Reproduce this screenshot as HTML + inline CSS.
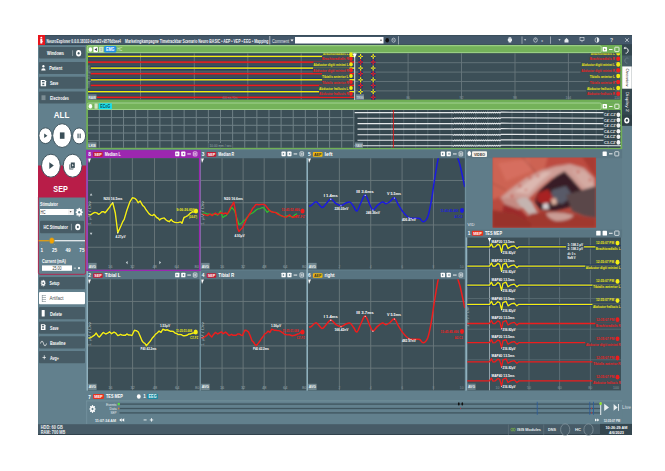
<!DOCTYPE html>
<html><head><meta charset="utf-8"><style>html,body{margin:0;padding:0;background:#fff;width:665px;height:471px;overflow:hidden}svg{display:block}</style></head>
<body><svg width="665" height="471" viewBox="0 0 665 471">
<rect x="38" y="35" width="594" height="400" fill="#62808d"/>
<rect x="38" y="35.3" width="594" height="9.7" fill="#44586a"/>
<line x1="38" y1="35.6" x2="632" y2="35.6" stroke="#2c3c48" stroke-width="0.6"/>
<line x1="38" y1="44.6" x2="632" y2="44.6" stroke="#2e3e4a" stroke-width="0.6"/>
<rect x="38" y="35" width="7" height="10" fill="#e8141b"/>
<ellipse cx="41.3" cy="37.4" rx="1.0" ry="0.7" fill="#ffffff"/>
<path d="M40.3,38.6 h2.0 v2.2 l1,0.6 l-1,0.4 v1.8 h-2 z" fill="#ffffff" />
<text x="46.5" y="42.9" font-size="6.0" fill="#f4f6f8" font-family="Liberation Sans" font-weight="bold" textLength="74.5" lengthAdjust="spacingAndGlyphs">NeuroExplorer 0.0.0.18102-beta22+9576dbee4</text>
<text x="125" y="42.6" font-size="6.0" fill="#f4f6f8" font-family="Liberation Sans" font-weight="bold" textLength="143.5" lengthAdjust="spacingAndGlyphs">Marketingkampagne Timetrackbar Scenario Neuro BASIC • AEP • VEP • EEG • Mapping</text>
<line x1="269.8" y1="36" x2="269.8" y2="44.5" stroke="#ffffff" stroke-width="0.6"/>
<text x="272" y="42.6" font-size="6" fill="#e8eef0" font-family="Liberation Sans" textLength="17" lengthAdjust="spacingAndGlyphs">Comment</text>
<path d="M290.5,39.5 h3 l-1.5,2 z" fill="#ffffff" />
<rect x="295" y="37" width="88.5" height="6.5" fill="#ffffff"/>
<path d="M380,39.8 h2 l-1,1.4 z" fill="#333" />
<rect x="507.8" y="38.6" width="4.2" height="2.6" fill="#e6ecef" rx="0.4"/>
<rect x="508.6" y="37.3" width="2.6" height="1.4" fill="#e6ecef"/>
<rect x="508.6" y="41" width="2.6" height="1.5" fill="#e6ecef"/>
<line x1="522" y1="36.5" x2="522" y2="43.8" stroke="#e6ecef" stroke-width="0.5"/>
<path d="M524,39.2 h2.2 l-1.1,1.5 z" fill="#e6ecef" />
<ellipse cx="535.5" cy="40" rx="1.8" ry="2.2" fill="none" stroke="#e6ecef" stroke-width="0.6"/>
<line x1="535.5" y1="38.5" x2="535.5" y2="40" stroke="#e6ecef" stroke-width="0.5"/>
<text x="542" y="41.6" font-size="3.5" fill="#e6ecef" font-family="Liberation Sans" text-anchor="middle">x</text>
<line x1="550.5" y1="36.5" x2="550.5" y2="43.8" stroke="#e6ecef" stroke-width="0.5"/>
<path d="M558.4,39.2 h2.2 l-1.1,1.5 z" fill="#e6ecef" />
<path d="M564.5,40 l2,-2 l2,2 v2.4 h-4 z" fill="#e6ecef" />
<rect x="580" y="37.6" width="4" height="3" fill="none" stroke="#e6ecef" stroke-width="0.6"/>
<line x1="582" y1="40.6" x2="582" y2="42.2" stroke="#e6ecef" stroke-width="0.6"/>
<ellipse cx="597" cy="40" rx="2" ry="2.4" fill="none" stroke="#e6ecef" stroke-width="0.6"/>
<path d="M597,37.6 a2,2.4 0 0 1 0,4.8 z" fill="#e6ecef" />
<text x="611.5" y="42.2" font-size="5" fill="#e6ecef" font-family="Liberation Sans" font-weight="bold" text-anchor="middle">?</text>
<line x1="625.3" y1="38.3" x2="628.7" y2="41.9" stroke="#e6ecef" stroke-width="0.7"/>
<line x1="628.7" y1="38.3" x2="625.3" y2="41.9" stroke="#e6ecef" stroke-width="0.7"/>
<ellipse cx="387.2" cy="40.2" rx="1.8" ry="2.2" fill="#111"/>
<ellipse cx="393.6" cy="40.2" rx="1.7" ry="2.1" fill="none" stroke="#dfe6ea" stroke-width="0.6"/>
<line x1="392.6" y1="39" x2="394.6" y2="41.4" stroke="#dfe6ea" stroke-width="0.5"/>
<line x1="398.5" y1="36.2" x2="398.5" y2="44.5" stroke="#e6ecef" stroke-width="0.5"/>
<rect x="39" y="47" width="46.3" height="11.5" fill="#475c66" rx="1"/>
<rect x="39" y="62" width="46.3" height="12" fill="#475c66" rx="1"/>
<rect x="39" y="76.8" width="46.3" height="12" fill="#475c66" rx="1"/>
<rect x="39" y="91.4" width="46.3" height="12" fill="#475c66" rx="1"/>
<text x="47" y="55" font-size="5.2" fill="#ffffff" font-family="Liberation Sans" font-weight="bold" textLength="17" lengthAdjust="spacingAndGlyphs">Windows</text>
<line x1="72.6" y1="50.3" x2="72.6" y2="56" stroke="#c8d2d6" stroke-width="0.5"/>
<ellipse cx="78.6" cy="53.2" rx="2.6" ry="3.2" fill="#ffffff"/>
<ellipse cx="78.6" cy="53.2" rx="1.0" ry="1.2" fill="#475c66"/>
<ellipse cx="43.4" cy="66.3" rx="1.1" ry="1.3" fill="#ffffff"/>
<path d="M41.2,70.6 q0,-2.4 2.2,-2.4 q2.2,0 2.2,2.4 z" fill="#ffffff" />
<text x="49.2" y="69.8" font-size="5.2" fill="#ffffff" font-family="Liberation Sans" font-weight="bold" textLength="13" lengthAdjust="spacingAndGlyphs">Patient</text>
<path d="M40.7,80.1 h4.2 l1.2,1.2 v4.9 h-5.4 z" fill="#ffffff" />
<rect x="42" y="81" width="2.6" height="1.4" fill="#475c66"/>
<rect x="42.3" y="83.6" width="2" height="1.6" fill="#475c66"/>
<text x="49.9" y="84.5" font-size="5.2" fill="#ffffff" font-family="Liberation Sans" font-weight="bold" textLength="8.5" lengthAdjust="spacingAndGlyphs">Save</text>
<rect x="41.5" y="95.3" width="4" height="4.8" fill="#7d8d94"/>
<text x="49.9" y="99.5" font-size="5.2" fill="#ffffff" font-family="Liberation Sans" font-weight="bold" textLength="19" lengthAdjust="spacingAndGlyphs">Electrodes</text>
<text x="61.5" y="118" font-size="9.5" fill="#ffffff" font-family="Liberation Sans" font-weight="bold" text-anchor="middle" textLength="15.5" lengthAdjust="spacingAndGlyphs">ALL</text>
<ellipse cx="45.5" cy="135.7" rx="6.6" ry="7.9" fill="#ffffff" stroke="#40555f" stroke-width="1.0"/>
<path d="M44.2,133.6 l3.2,2.2 l-3.2,2.2 z" fill="#3b4f58" />
<ellipse cx="62.1" cy="135.6" rx="9.4" ry="11.9" fill="#ffffff" stroke="#40555f" stroke-width="1.0"/>
<rect x="59.9" y="132.4" width="4.6" height="6.4" fill="#3b4f58"/>
<ellipse cx="79.1" cy="135.9" rx="6.5" ry="8.0" fill="#ffffff" stroke="#40555f" stroke-width="1.0"/>
<rect x="77.5" y="133.6" width="1.1" height="4.6" fill="#3b4f58"/>
<rect x="79.6" y="133.6" width="1.1" height="4.6" fill="#3b4f58"/>
<rect x="38" y="165.5" width="48" height="32" fill="#b81d48"/>
<ellipse cx="50.9" cy="165.7" rx="9.4" ry="11.5" fill="#ffffff" stroke="#40555f" stroke-width="1.0"/>
<path d="M49.3,162.3 l4.5,3.3 l-4.5,3.3 z" fill="#3b4f58" />
<ellipse cx="72.6" cy="165.7" rx="9.4" ry="11.5" fill="#ffffff" stroke="#40555f" stroke-width="1.0"/>
<rect x="70.8" y="162.5" width="4" height="5.4" fill="#3b4f58"/>
<path d="M70.1,164 v4.7 h3.6" fill="none" stroke="#3b4f58" stroke-width="0.5" />
<path d="M69.5,164.6 v4.7 h3.6" fill="none" stroke="#3b4f58" stroke-width="0.5" />
<path d="M72.2,164 l1.5,1.2 l-1.5,1.2 z" fill="#ffffff" />
<text x="60.6" y="191.5" font-size="9" fill="#ffffff" font-family="Liberation Sans" font-weight="bold" text-anchor="middle" textLength="14.5" lengthAdjust="spacingAndGlyphs">SEP</text>
<path d="M38.4,197 V272.5 q0,1.8 1.8,1.8 H83.9 q1.8,0 1.8,-1.8 V197" fill="none" stroke="#b81d48" stroke-width="0.9" />
<text x="40" y="206" font-size="4.8" fill="#ffffff" font-family="Liberation Sans" font-weight="bold" textLength="18" lengthAdjust="spacingAndGlyphs">Stimulator</text>
<rect x="40" y="209" width="33.8" height="6" fill="#ffffff"/>
<rect x="68" y="209.4" width="5.4" height="5.2" fill="#f2f2f2"/>
<path d="M69.6,211.3 h2 l-1,1.3 z" fill="#333" />
<text x="40.5" y="213.8" font-size="4.5" fill="#333" font-family="Liberation Sans" textLength="5" lengthAdjust="spacingAndGlyphs">HC</text>
<ellipse cx="79.2" cy="212.2" rx="2.7" ry="3.3" fill="#ffffff"/>
<ellipse cx="79.2" cy="212.2" rx="1.1" ry="1.3" fill="#62808d"/>
<ellipse cx="79.2" cy="208.6" rx="0.75" ry="0.85" fill="#ffffff"/>
<ellipse cx="79.2" cy="215.79999999999998" rx="0.75" ry="0.85" fill="#ffffff"/>
<ellipse cx="76.4" cy="212.2" rx="0.75" ry="0.85" fill="#ffffff"/>
<ellipse cx="82.0" cy="212.2" rx="0.75" ry="0.85" fill="#ffffff"/>
<ellipse cx="77.2" cy="209.7" rx="0.75" ry="0.85" fill="#ffffff"/>
<ellipse cx="81.2" cy="209.7" rx="0.75" ry="0.85" fill="#ffffff"/>
<ellipse cx="77.2" cy="214.7" rx="0.75" ry="0.85" fill="#ffffff"/>
<ellipse cx="81.2" cy="214.7" rx="0.75" ry="0.85" fill="#ffffff"/>
<rect x="40" y="220.8" width="44" height="12.4" fill="#475c66" rx="1"/>
<text x="43.5" y="228.8" font-size="5" fill="#ffffff" font-family="Liberation Sans" font-weight="bold" textLength="24.5" lengthAdjust="spacingAndGlyphs">HC Stimulator</text>
<line x1="71.4" y1="223.8" x2="71.4" y2="230.3" stroke="#c8d2d6" stroke-width="0.5"/>
<ellipse cx="77.8" cy="227" rx="2.6" ry="3.2" fill="#ffffff"/>
<ellipse cx="77.8" cy="227" rx="1.0" ry="1.2" fill="#475c66"/>
<rect x="38.6" y="240.2" width="13" height="1.1" fill="#f5a300"/>
<rect x="52" y="240.2" width="33" height="1.1" fill="#ffffff"/>
<ellipse cx="51.8" cy="240.7" rx="2.6" ry="3.1" fill="#f5a300" stroke="#4d7fa0" stroke-width="0.4"/>
<ellipse cx="41.7" cy="244.6" rx="0.35" ry="0.45" fill="#9fb4bd"/>
<text x="41.7" y="252" font-size="4.6" fill="#ffffff" font-family="Liberation Sans" font-weight="bold" text-anchor="middle">1</text>
<ellipse cx="54.6" cy="244.6" rx="0.35" ry="0.45" fill="#9fb4bd"/>
<text x="54.6" y="252" font-size="4.6" fill="#ffffff" font-family="Liberation Sans" font-weight="bold" text-anchor="middle">25</text>
<ellipse cx="68" cy="244.6" rx="0.35" ry="0.45" fill="#9fb4bd"/>
<text x="68" y="252" font-size="4.6" fill="#ffffff" font-family="Liberation Sans" font-weight="bold" text-anchor="middle">49</text>
<ellipse cx="81.9" cy="244.6" rx="0.35" ry="0.45" fill="#9fb4bd"/>
<text x="81.9" y="252" font-size="4.6" fill="#ffffff" font-family="Liberation Sans" font-weight="bold" text-anchor="middle">75</text>
<text x="41.9" y="263" font-size="5" fill="#ffffff" font-family="Liberation Sans" font-weight="bold" textLength="24" lengthAdjust="spacingAndGlyphs">Current (mA)</text>
<rect x="42" y="265.4" width="30" height="5.4" fill="#ffffff"/>
<text x="57" y="269.8" font-size="4.6" fill="#333" font-family="Liberation Sans" text-anchor="middle" textLength="9" lengthAdjust="spacingAndGlyphs">25.00</text>
<rect x="73.8" y="267.8" width="2.2" height="0.6" fill="#ffffff"/>
<ellipse cx="79" cy="268.1" rx="1.0" ry="1.2" fill="#ffffff"/>
<rect x="39" y="277" width="46" height="12.2" fill="#475c66" rx="1"/>
<rect x="39" y="291.9" width="46" height="12.2" fill="#475c66" rx="1"/>
<rect x="39" y="307" width="46" height="12.2" fill="#475c66" rx="1"/>
<rect x="39" y="321.5" width="46" height="12.2" fill="#475c66" rx="1"/>
<rect x="39" y="336.2" width="46" height="12.2" fill="#475c66" rx="1"/>
<rect x="39" y="351" width="46" height="12.2" fill="#475c66" rx="1"/>
<rect x="39" y="291.9" width="46" height="12.4" fill="#ffffff" rx="1"/>
<ellipse cx="43.2" cy="283.1" rx="1.9" ry="2.3" fill="#ffffff"/>
<ellipse cx="43.2" cy="283.1" rx="0.8" ry="0.95" fill="#475c66"/>
<ellipse cx="43.2" cy="280.5" rx="0.6" ry="0.7" fill="#ffffff"/>
<ellipse cx="43.2" cy="285.70000000000005" rx="0.6" ry="0.7" fill="#ffffff"/>
<ellipse cx="41.2" cy="283.1" rx="0.6" ry="0.7" fill="#ffffff"/>
<ellipse cx="45.2" cy="283.1" rx="0.6" ry="0.7" fill="#ffffff"/>
<ellipse cx="41.75" cy="281.25" rx="0.6" ry="0.7" fill="#ffffff"/>
<ellipse cx="44.650000000000006" cy="281.25" rx="0.6" ry="0.7" fill="#ffffff"/>
<ellipse cx="41.75" cy="284.95000000000005" rx="0.6" ry="0.7" fill="#ffffff"/>
<ellipse cx="44.650000000000006" cy="284.95000000000005" rx="0.6" ry="0.7" fill="#ffffff"/>
<text x="49.5" y="285" font-size="5.2" fill="#ffffff" font-family="Liberation Sans" font-weight="bold" textLength="10" lengthAdjust="spacingAndGlyphs">Setup</text>
<line x1="42" y1="295.5" x2="46" y2="295.5" stroke="#6b7a80" stroke-width="0.5"/>
<line x1="42" y1="297.5" x2="46" y2="297.5" stroke="#6b7a80" stroke-width="0.5"/>
<line x1="42" y1="299.5" x2="46" y2="299.5" stroke="#6b7a80" stroke-width="0.5"/>
<line x1="42" y1="301.5" x2="46" y2="301.5" stroke="#6b7a80" stroke-width="0.5"/>
<line x1="42.3" y1="295" x2="42.3" y2="302" stroke="#6b7a80" stroke-width="0.5"/>
<text x="49.6" y="300.4" font-size="5.4" fill="#4a4f52" font-family="Liberation Sans" textLength="14" lengthAdjust="spacingAndGlyphs">Artifact</text>
<rect x="41.7" y="310" width="3" height="6.6" fill="#ffffff" rx="0.6"/>
<text x="50" y="315.5" font-size="5.2" fill="#ffffff" font-family="Liberation Sans" font-weight="bold" textLength="12" lengthAdjust="spacingAndGlyphs">Delete</text>
<path d="M40.9,324.3 h3.6 l1,1 v4.8 h-4.6 z" fill="#ffffff" />
<rect x="41.9" y="325.1" width="2.2" height="1.2" fill="#475c66"/>
<rect x="42.2" y="327.3" width="1.6" height="1.6" fill="#475c66"/>
<text x="50" y="330" font-size="5.2" fill="#ffffff" font-family="Liberation Sans" font-weight="bold" textLength="8.5" lengthAdjust="spacingAndGlyphs">Save</text>
<path d="M40.5,343.5 q1.5,-5 3,0 t3,0" fill="none" stroke="#ffffff" stroke-width="0.7" />
<text x="50" y="344.8" font-size="5.2" fill="#ffffff" font-family="Liberation Sans" font-weight="bold" textLength="15.5" lengthAdjust="spacingAndGlyphs">Baseline</text>
<rect x="42.5" y="357" width="3.4" height="0.7" fill="#ffffff"/>
<rect x="43.85" y="355.3" width="0.7" height="4" fill="#ffffff"/>
<text x="50" y="359.5" font-size="5.2" fill="#ffffff" font-family="Liberation Sans" font-weight="bold" textLength="9" lengthAdjust="spacingAndGlyphs">Avg+</text>
<rect x="86.2" y="44.9" width="536" height="57.6" fill="#70af56"/>
<rect x="87.3" y="45.7" width="514" height="7" fill="#74b25a" rx="1.5" stroke="#a9d995" stroke-width="0.9"/>
<rect x="88" y="53.2" width="532.3" height="46.4" fill="#3c4f57"/>
<rect x="88.2" y="46.6" width="4.4" height="5.8" fill="#8cc474" rx="1"/>
<ellipse cx="90.4" cy="49.5" rx="1.7" ry="2.2" fill="#ffffff"/>
<rect x="93.4" y="46.8" width="4.5" height="5.4" fill="#ffffff" rx="0.8"/>
<path d="M94.5,49.5 l2.4,-1.6 v3.2 z" fill="#334" />
<rect x="99" y="46.8" width="4.5" height="5.4" fill="#cfe3c0" rx="0.5"/>
<text x="101.2" y="51.2" font-size="4" fill="#8aa080" font-family="Liberation Sans" text-anchor="middle">1</text>
<rect x="104.2" y="46.1" width="12.1" height="6.4" fill="#1f8fe6" rx="1.2"/>
<text x="110.2" y="51.2" font-size="5" fill="#ffffff" font-family="Liberation Sans" font-weight="bold" text-anchor="middle" textLength="8.5" lengthAdjust="spacingAndGlyphs">EMG</text>
<text x="117.2" y="51.3" font-size="4.8" fill="#d5ecd0" font-family="Liberation Sans" textLength="5" lengthAdjust="spacingAndGlyphs">HC</text>
<rect x="602.6" y="47" width="4.4" height="4.6" fill="#ffffff" rx="0.6"/>
<path d="M604,48.2 l2,1.1 l-2,1.1 z" fill="#70af56" />
<rect x="609" y="49" width="3.5" height="0.9" fill="#ffffff"/>
<rect x="614.8" y="47.2" width="4.2" height="4.4" fill="none" rx="0.6" stroke="#ffffff" stroke-width="0.8"/>
<line x1="88" y1="62.7" x2="620.3" y2="62.7" stroke="#66767c" stroke-width="0.9"/>
<line x1="88" y1="72.1" x2="620.3" y2="72.1" stroke="#66767c" stroke-width="0.9"/>
<line x1="88" y1="81.5" x2="620.3" y2="81.5" stroke="#66767c" stroke-width="0.9"/>
<line x1="88" y1="90.9" x2="620.3" y2="90.9" stroke="#66767c" stroke-width="0.9"/>
<rect x="88" y="54.5" width="266.7" height="3.8" fill="#22376c"/>
<rect x="90.8" y="66.19999999999999" width="263.9" height="3.8" fill="#22376c"/>
<rect x="90.8" y="77.89999999999999" width="263.9" height="3.8" fill="#22376c"/>
<rect x="88" y="89.8" width="266.7" height="3.8" fill="#22376c"/>
<rect x="88" y="60.7" width="266.7" height="2.8" fill="#3d3a52" opacity="0.6"/>
<rect x="90.8" y="72.3" width="263.9" height="2.8" fill="#3d3a52" opacity="0.6"/>
<rect x="90.8" y="84.0" width="263.9" height="2.8" fill="#3d3a52" opacity="0.6"/>
<rect x="96.7" y="95.89999999999999" width="258.0" height="2.8" fill="#3d3a52" opacity="0.6"/>
<line x1="140.5" y1="53.2" x2="140.5" y2="99.6" stroke="#66767c" stroke-width="0.9"/>
<line x1="194.3" y1="53.2" x2="194.3" y2="99.6" stroke="#66767c" stroke-width="0.9"/>
<line x1="247.8" y1="53.2" x2="247.8" y2="99.6" stroke="#66767c" stroke-width="0.9"/>
<line x1="301.2" y1="53.2" x2="301.2" y2="99.6" stroke="#66767c" stroke-width="0.9"/>
<line x1="354.7" y1="53.2" x2="354.7" y2="99.6" stroke="#66767c" stroke-width="0.9"/>
<line x1="408.1" y1="53.2" x2="408.1" y2="99.6" stroke="#66767c" stroke-width="0.9"/>
<line x1="461.5" y1="53.2" x2="461.5" y2="99.6" stroke="#66767c" stroke-width="0.9"/>
<line x1="515" y1="53.2" x2="515" y2="99.6" stroke="#66767c" stroke-width="0.9"/>
<line x1="568.4" y1="53.2" x2="568.4" y2="99.6" stroke="#66767c" stroke-width="0.9"/>
<rect x="88" y="55.65" width="266.7" height="1.5" fill="#f2ec10"/>
<rect x="90.8" y="67.35" width="263.9" height="1.5" fill="#f2ec10"/>
<rect x="90.8" y="79.05" width="263.9" height="1.5" fill="#f2ec10"/>
<rect x="88" y="90.95" width="266.7" height="1.5" fill="#f2ec10"/>
<rect x="88" y="61.35" width="266.7" height="1.5" fill="#ee1c1c"/>
<rect x="90.8" y="72.95" width="263.9" height="1.5" fill="#ee1c1c"/>
<rect x="90.8" y="84.65" width="263.9" height="1.5" fill="#ee1c1c"/>
<rect x="96.7" y="96.55" width="258.0" height="1.5" fill="#ee1c1c"/>
<text x="0" y="0" font-size="3.5" fill="#8fa0a6" font-family="Liberation Sans" transform="translate(90.2,88) rotate(-90)" textLength="23" lengthAdjust="spacingAndGlyphs">Scale: 500 µV/Div</text>
<rect x="88" y="94.3" width="8.5" height="5.5" fill="#6b7f88"/>
<text x="92.2" y="98.6" font-size="4.2" fill="#e8eef2" font-family="Liberation Sans" font-weight="bold" text-anchor="middle" textLength="7.5" lengthAdjust="spacingAndGlyphs">RAW</text>
<text x="230" y="99" font-size="3.5" fill="#7d8d93" font-family="Liberation Sans" text-anchor="middle" textLength="15" lengthAdjust="spacingAndGlyphs">400 ms / Div</text>
<clipPath id="c1"><rect x="300" y="53.2" width="60" height="48"/></clipPath>
<rect x="323" y="53.2" width="26.5" height="2.6" fill="#3c4f57"/>
<rect x="322" y="55.9" width="27.5" height="5.8" fill="#3c4f57"/>
<rect x="313.5" y="61.50000000000001" width="36.0" height="5.8" fill="#3c4f57"/>
<rect x="313" y="67.3" width="36.5" height="5.8" fill="#3c4f57"/>
<rect x="322" y="73.1" width="27.5" height="5.8" fill="#3c4f57"/>
<rect x="322" y="79.1" width="27.5" height="5.8" fill="#3c4f57"/>
<rect x="319" y="85.1" width="30.5" height="5.8" fill="#3c4f57"/>
<rect x="319" y="90.89999999999999" width="30.5" height="5.8" fill="#3c4f57"/>
<g clip-path="url(#c1)">
<text x="323" y="54.9" font-size="4.4" fill="#f2ec10" font-family="Liberation Sans" font-weight="bold" textLength="25.5" lengthAdjust="spacingAndGlyphs">Brachioradialis L</text>
<text x="322" y="60.4" font-size="4.4" fill="#ee2020" font-family="Liberation Sans" font-weight="bold" textLength="26.5" lengthAdjust="spacingAndGlyphs">Brachioradialis R</text>
<text x="313.5" y="66.0" font-size="4.4" fill="#f2ec10" font-family="Liberation Sans" font-weight="bold" textLength="35.0" lengthAdjust="spacingAndGlyphs">Abductor digiti minimi L</text>
<text x="313" y="71.8" font-size="4.4" fill="#ee2020" font-family="Liberation Sans" font-weight="bold" textLength="35.5" lengthAdjust="spacingAndGlyphs">Abductor digiti minimi R</text>
<text x="322" y="77.6" font-size="4.4" fill="#f2ec10" font-family="Liberation Sans" font-weight="bold" textLength="26.5" lengthAdjust="spacingAndGlyphs">Tibialis anterior L</text>
<text x="322" y="83.6" font-size="4.4" fill="#ee2020" font-family="Liberation Sans" font-weight="bold" textLength="26.5" lengthAdjust="spacingAndGlyphs">Tibialis anterior R</text>
<text x="319" y="89.6" font-size="4.4" fill="#f2ec10" font-family="Liberation Sans" font-weight="bold" textLength="29.5" lengthAdjust="spacingAndGlyphs">Abductor hallucis L</text>
<text x="319" y="95.39999999999999" font-size="4.4" fill="#ee2020" font-family="Liberation Sans" font-weight="bold" textLength="29.5" lengthAdjust="spacingAndGlyphs">Abductor hallucis R</text>
</g>
<ellipse cx="351" cy="54.3" rx="1.8" ry="2.1" fill="#f2ec10"/>
<ellipse cx="351" cy="58.8" rx="1.8" ry="2.1" fill="#ee2020"/>
<ellipse cx="351" cy="64.4" rx="1.8" ry="2.1" fill="#f2ec10"/>
<ellipse cx="351" cy="70.2" rx="1.8" ry="2.1" fill="#ee2020"/>
<ellipse cx="351" cy="76.0" rx="1.8" ry="2.1" fill="#f2ec10"/>
<ellipse cx="351" cy="82.0" rx="1.8" ry="2.1" fill="#ee2020"/>
<ellipse cx="351" cy="88.0" rx="1.8" ry="2.1" fill="#f2ec10"/>
<ellipse cx="351" cy="93.8" rx="1.8" ry="2.1" fill="#ee2020"/>
<line x1="354.7" y1="53.2" x2="354.7" y2="100" stroke="#c9d6dc" stroke-width="1"/>
<path d="M352.5,53.4 h4.4 l-2.2,4.5 z" fill="#ffffff" />
<rect x="358.3" y="53.9" width="4.6" height="5" fill="#1f3575" rx="1.2"/>
<rect x="359.95000000000005" y="53.9" width="1.3" height="5" fill="#f2ec10"/>
<rect x="358.3" y="55.75" width="4.6" height="1.3" fill="#f2ec10"/>
<rect x="360.1" y="55.9" width="1" height="1" fill="#2a3f70"/>
<rect x="358.3" y="59.6" width="4.6" height="5" fill="#1f3575" rx="1.2"/>
<rect x="359.95000000000005" y="59.6" width="1.3" height="5" fill="#ee2020"/>
<rect x="358.3" y="61.45" width="4.6" height="1.3" fill="#ee2020"/>
<rect x="360.1" y="61.6" width="1" height="1" fill="#2a3f70"/>
<rect x="358.3" y="65.6" width="4.6" height="5" fill="#1f3575" rx="1.2"/>
<rect x="359.95000000000005" y="65.6" width="1.3" height="5" fill="#f2ec10"/>
<rect x="358.3" y="67.44999999999999" width="4.6" height="1.3" fill="#f2ec10"/>
<rect x="360.1" y="67.6" width="1" height="1" fill="#2a3f70"/>
<rect x="358.3" y="71.2" width="4.6" height="5" fill="#1f3575" rx="1.2"/>
<rect x="359.95000000000005" y="71.2" width="1.3" height="5" fill="#ee2020"/>
<rect x="358.3" y="73.05" width="4.6" height="1.3" fill="#ee2020"/>
<rect x="360.1" y="73.2" width="1" height="1" fill="#2a3f70"/>
<rect x="358.3" y="77.3" width="4.6" height="5" fill="#1f3575" rx="1.2"/>
<rect x="359.95000000000005" y="77.3" width="1.3" height="5" fill="#f2ec10"/>
<rect x="358.3" y="79.14999999999999" width="4.6" height="1.3" fill="#f2ec10"/>
<rect x="360.1" y="79.3" width="1" height="1" fill="#2a3f70"/>
<rect x="358.3" y="82.9" width="4.6" height="5" fill="#1f3575" rx="1.2"/>
<rect x="359.95000000000005" y="82.9" width="1.3" height="5" fill="#ee2020"/>
<rect x="358.3" y="84.75" width="4.6" height="1.3" fill="#ee2020"/>
<rect x="360.1" y="84.9" width="1" height="1" fill="#2a3f70"/>
<rect x="358.3" y="89.2" width="4.6" height="5" fill="#1f3575" rx="1.2"/>
<rect x="359.95000000000005" y="89.2" width="1.3" height="5" fill="#f2ec10"/>
<rect x="358.3" y="91.05" width="4.6" height="1.3" fill="#f2ec10"/>
<rect x="360.1" y="91.2" width="1" height="1" fill="#2a3f70"/>
<rect x="358.3" y="94.8" width="4.6" height="5" fill="#1f3575" rx="1.2"/>
<rect x="359.95000000000005" y="94.8" width="1.3" height="5" fill="#ee2020"/>
<rect x="358.3" y="96.64999999999999" width="4.6" height="1.3" fill="#ee2020"/>
<rect x="360.1" y="96.8" width="1" height="1" fill="#2a3f70"/>
<rect x="370.9" y="53.9" width="4.6" height="5" fill="#1f3575" rx="1.2"/>
<rect x="372.55" y="53.9" width="1.3" height="5" fill="#f2ec10"/>
<rect x="370.9" y="55.75" width="4.6" height="1.3" fill="#f2ec10"/>
<rect x="372.7" y="55.9" width="1" height="1" fill="#2a3f70"/>
<rect x="370.9" y="59.6" width="4.6" height="5" fill="#1f3575" rx="1.2"/>
<rect x="372.55" y="59.6" width="1.3" height="5" fill="#ee2020"/>
<rect x="370.9" y="61.45" width="4.6" height="1.3" fill="#ee2020"/>
<rect x="372.7" y="61.6" width="1" height="1" fill="#2a3f70"/>
<rect x="370.9" y="65.6" width="4.6" height="5" fill="#1f3575" rx="1.2"/>
<rect x="372.55" y="65.6" width="1.3" height="5" fill="#f2ec10"/>
<rect x="370.9" y="67.44999999999999" width="4.6" height="1.3" fill="#f2ec10"/>
<rect x="372.7" y="67.6" width="1" height="1" fill="#2a3f70"/>
<rect x="370.9" y="71.2" width="4.6" height="5" fill="#1f3575" rx="1.2"/>
<rect x="372.55" y="71.2" width="1.3" height="5" fill="#ee2020"/>
<rect x="370.9" y="73.05" width="4.6" height="1.3" fill="#ee2020"/>
<rect x="372.7" y="73.2" width="1" height="1" fill="#2a3f70"/>
<rect x="370.9" y="77.3" width="4.6" height="5" fill="#1f3575" rx="1.2"/>
<rect x="372.55" y="77.3" width="1.3" height="5" fill="#f2ec10"/>
<rect x="370.9" y="79.14999999999999" width="4.6" height="1.3" fill="#f2ec10"/>
<rect x="372.7" y="79.3" width="1" height="1" fill="#2a3f70"/>
<rect x="370.9" y="82.9" width="4.6" height="5" fill="#1f3575" rx="1.2"/>
<rect x="372.55" y="82.9" width="1.3" height="5" fill="#ee2020"/>
<rect x="370.9" y="84.75" width="4.6" height="1.3" fill="#ee2020"/>
<rect x="372.7" y="84.9" width="1" height="1" fill="#2a3f70"/>
<rect x="370.9" y="89.2" width="4.6" height="5" fill="#1f3575" rx="1.2"/>
<rect x="372.55" y="89.2" width="1.3" height="5" fill="#f2ec10"/>
<rect x="370.9" y="91.05" width="4.6" height="1.3" fill="#f2ec10"/>
<rect x="372.7" y="91.2" width="1" height="1" fill="#2a3f70"/>
<rect x="370.9" y="94.8" width="4.6" height="5" fill="#1f3575" rx="1.2"/>
<rect x="372.55" y="94.8" width="1.3" height="5" fill="#ee2020"/>
<rect x="370.9" y="96.64999999999999" width="4.6" height="1.3" fill="#ee2020"/>
<rect x="372.7" y="96.8" width="1" height="1" fill="#2a3f70"/>
<rect x="356" y="94.3" width="8" height="5.5" fill="#6f8590"/>
<text x="360" y="98.6" font-size="4.0" fill="#e8eef2" font-family="Liberation Sans" text-anchor="middle" textLength="7" lengthAdjust="spacingAndGlyphs">TRIG</text>
<clipPath id="c2"><rect x="560" y="53.2" width="62" height="48"/></clipPath>
<g clip-path="url(#c2)">
<rect x="589.655" y="50.4" width="25.645" height="5.8" fill="#3c4f57"/>
<text x="590.655" y="54.9" font-size="4.4" fill="#f2ec10" font-family="Liberation Sans" font-weight="bold" textLength="24.145" lengthAdjust="spacingAndGlyphs">Brachioradialis L</text>
<ellipse cx="618.2" cy="53.3" rx="2.0" ry="2.3" fill="#f2ec10"/>
<rect x="588.7249999999999" y="55.9" width="26.575000000000003" height="5.8" fill="#3c4f57"/>
<text x="589.7249999999999" y="60.4" font-size="4.4" fill="#ee2020" font-family="Liberation Sans" font-weight="bold" textLength="25.075000000000003" lengthAdjust="spacingAndGlyphs">Brachioradialis R</text>
<ellipse cx="618.2" cy="58.8" rx="2.0" ry="2.3" fill="#ee2020"/>
<rect x="580.8199999999999" y="61.50000000000001" width="34.480000000000004" height="5.8" fill="#3c4f57"/>
<text x="581.8199999999999" y="66.0" font-size="4.4" fill="#f2ec10" font-family="Liberation Sans" font-weight="bold" textLength="32.980000000000004" lengthAdjust="spacingAndGlyphs">Abductor digiti minimi L</text>
<ellipse cx="618.2" cy="64.4" rx="2.0" ry="2.3" fill="#f2ec10"/>
<rect x="580.3549999999999" y="67.3" width="34.945" height="5.8" fill="#3c4f57"/>
<text x="581.3549999999999" y="71.8" font-size="4.4" fill="#ee2020" font-family="Liberation Sans" font-weight="bold" textLength="33.445" lengthAdjust="spacingAndGlyphs">Abductor digiti minimi R</text>
<ellipse cx="618.2" cy="70.2" rx="2.0" ry="2.3" fill="#ee2020"/>
<rect x="588.7249999999999" y="73.1" width="26.575000000000003" height="5.8" fill="#3c4f57"/>
<text x="589.7249999999999" y="77.6" font-size="4.4" fill="#f2ec10" font-family="Liberation Sans" font-weight="bold" textLength="25.075000000000003" lengthAdjust="spacingAndGlyphs">Tibialis anterior L</text>
<ellipse cx="618.2" cy="76.0" rx="2.0" ry="2.3" fill="#f2ec10"/>
<rect x="588.7249999999999" y="79.1" width="26.575000000000003" height="5.8" fill="#3c4f57"/>
<text x="589.7249999999999" y="83.6" font-size="4.4" fill="#ee2020" font-family="Liberation Sans" font-weight="bold" textLength="25.075000000000003" lengthAdjust="spacingAndGlyphs">Tibialis anterior R</text>
<ellipse cx="618.2" cy="82.0" rx="2.0" ry="2.3" fill="#ee2020"/>
<rect x="585.935" y="85.1" width="29.365000000000002" height="5.8" fill="#3c4f57"/>
<text x="586.935" y="89.6" font-size="4.4" fill="#f2ec10" font-family="Liberation Sans" font-weight="bold" textLength="27.865000000000002" lengthAdjust="spacingAndGlyphs">Abductor hallucis L</text>
<ellipse cx="618.2" cy="88.0" rx="2.0" ry="2.3" fill="#f2ec10"/>
<rect x="585.935" y="90.89999999999999" width="29.365000000000002" height="5.8" fill="#3c4f57"/>
<text x="586.935" y="95.39999999999999" font-size="4.4" fill="#ee2020" font-family="Liberation Sans" font-weight="bold" textLength="27.865000000000002" lengthAdjust="spacingAndGlyphs">Abductor hallucis R</text>
<ellipse cx="618.2" cy="93.8" rx="2.0" ry="2.3" fill="#ee2020"/>
</g>
<text x="408.1" y="99.0" font-size="3.5" fill="#8a9aa0" font-family="Liberation Sans" text-anchor="middle">86</text>
<text x="461.5" y="99.0" font-size="3.5" fill="#8a9aa0" font-family="Liberation Sans" text-anchor="middle">92</text>
<text x="515" y="99.0" font-size="3.5" fill="#8a9aa0" font-family="Liberation Sans" text-anchor="middle">98</text>
<text x="568.4" y="99.0" font-size="3.5" fill="#8a9aa0" font-family="Liberation Sans" text-anchor="middle">104</text>
<text x="617" y="99.2" font-size="3.5" fill="#8a9aa0" font-family="Liberation Sans" text-anchor="middle">110</text>
<rect x="86.2" y="102.3" width="536" height="46.9" fill="#70af56"/>
<rect x="87.3" y="103.0" width="514" height="6.6" fill="#74b25a" rx="1.5" stroke="#a9d995" stroke-width="0.9"/>
<rect x="88" y="110" width="532.3" height="37.8" fill="#3c4f57"/>
<rect x="88.2" y="103.4" width="4.4" height="5.8" fill="#8cc474" rx="1"/>
<ellipse cx="90.4" cy="106.3" rx="1.7" ry="2.2" fill="#ffffff"/>
<rect x="94.5" y="103.6" width="3.2" height="5.2" fill="#cfe3c0" rx="0.5"/>
<rect x="98.7" y="103.2" width="13.2" height="6.1" fill="#16e0f0" rx="0.4"/>
<text x="105.3" y="107.8" font-size="5" fill="#0d4a50" font-family="Liberation Sans" font-weight="bold" text-anchor="middle" textLength="10" lengthAdjust="spacingAndGlyphs">ECoG</text>
<rect x="602.6" y="104" width="4.4" height="4.6" fill="#ffffff" rx="0.6"/>
<path d="M604,105.2 l2,1.1 l-2,1.1 z" fill="#70af56" />
<rect x="609" y="106" width="3.5" height="0.9" fill="#ffffff"/>
<rect x="614.8" y="104.2" width="4.2" height="4.4" fill="none" rx="0.6" stroke="#ffffff" stroke-width="0.8"/>
<line x1="99.3" y1="110" x2="99.3" y2="147.8" stroke="#6f8086" stroke-width="1.0"/>
<line x1="111.42" y1="110" x2="111.42" y2="147.8" stroke="#6f8086" stroke-width="1.0"/>
<line x1="123.53999999999999" y1="110" x2="123.53999999999999" y2="147.8" stroke="#6f8086" stroke-width="1.0"/>
<line x1="135.66" y1="110" x2="135.66" y2="147.8" stroke="#6f8086" stroke-width="1.0"/>
<line x1="147.78" y1="110" x2="147.78" y2="147.8" stroke="#6f8086" stroke-width="1.0"/>
<line x1="159.89999999999998" y1="110" x2="159.89999999999998" y2="147.8" stroke="#6f8086" stroke-width="1.0"/>
<line x1="172.01999999999998" y1="110" x2="172.01999999999998" y2="147.8" stroke="#6f8086" stroke-width="1.0"/>
<line x1="184.14" y1="110" x2="184.14" y2="147.8" stroke="#6f8086" stroke-width="1.0"/>
<line x1="196.26" y1="110" x2="196.26" y2="147.8" stroke="#6f8086" stroke-width="1.0"/>
<line x1="208.38" y1="110" x2="208.38" y2="147.8" stroke="#6f8086" stroke-width="1.0"/>
<line x1="220.5" y1="110" x2="220.5" y2="147.8" stroke="#6f8086" stroke-width="1.0"/>
<line x1="232.62" y1="110" x2="232.62" y2="147.8" stroke="#6f8086" stroke-width="1.0"/>
<line x1="244.74" y1="110" x2="244.74" y2="147.8" stroke="#6f8086" stroke-width="1.0"/>
<line x1="256.86" y1="110" x2="256.86" y2="147.8" stroke="#6f8086" stroke-width="1.0"/>
<line x1="268.97999999999996" y1="110" x2="268.97999999999996" y2="147.8" stroke="#6f8086" stroke-width="1.0"/>
<line x1="281.09999999999997" y1="110" x2="281.09999999999997" y2="147.8" stroke="#6f8086" stroke-width="1.0"/>
<line x1="293.21999999999997" y1="110" x2="293.21999999999997" y2="147.8" stroke="#6f8086" stroke-width="1.0"/>
<line x1="305.34" y1="110" x2="305.34" y2="147.8" stroke="#6f8086" stroke-width="1.0"/>
<line x1="317.46" y1="110" x2="317.46" y2="147.8" stroke="#6f8086" stroke-width="1.0"/>
<line x1="329.58" y1="110" x2="329.58" y2="147.8" stroke="#6f8086" stroke-width="1.0"/>
<line x1="341.7" y1="110" x2="341.7" y2="147.8" stroke="#6f8086" stroke-width="1.0"/>
<line x1="353.82" y1="110" x2="353.82" y2="147.8" stroke="#6f8086" stroke-width="1.0"/>
<line x1="88" y1="117.6" x2="354.7" y2="117.6" stroke="#6f8086" stroke-width="1.0"/>
<line x1="88" y1="125.3" x2="354.7" y2="125.3" stroke="#6f8086" stroke-width="1.0"/>
<line x1="88" y1="133.0" x2="354.7" y2="133.0" stroke="#6f8086" stroke-width="1.0"/>
<line x1="88" y1="140.7" x2="354.7" y2="140.7" stroke="#6f8086" stroke-width="1.0"/>
<rect x="354.7" y="110" width="265.6" height="37.8" fill="#34464e"/>
<line x1="367.63" y1="110" x2="367.63" y2="147.8" stroke="#56676e" stroke-width="0.8"/>
<line x1="379.66" y1="110" x2="379.66" y2="147.8" stroke="#56676e" stroke-width="0.8"/>
<line x1="391.69" y1="110" x2="391.69" y2="147.8" stroke="#56676e" stroke-width="0.8"/>
<line x1="403.72" y1="110" x2="403.72" y2="147.8" stroke="#56676e" stroke-width="0.8"/>
<line x1="415.75" y1="110" x2="415.75" y2="147.8" stroke="#56676e" stroke-width="0.8"/>
<line x1="427.78000000000003" y1="110" x2="427.78000000000003" y2="147.8" stroke="#56676e" stroke-width="0.8"/>
<line x1="439.81" y1="110" x2="439.81" y2="147.8" stroke="#56676e" stroke-width="0.8"/>
<line x1="451.84000000000003" y1="110" x2="451.84000000000003" y2="147.8" stroke="#56676e" stroke-width="0.8"/>
<line x1="463.87" y1="110" x2="463.87" y2="147.8" stroke="#56676e" stroke-width="0.8"/>
<line x1="475.90000000000003" y1="110" x2="475.90000000000003" y2="147.8" stroke="#56676e" stroke-width="0.8"/>
<line x1="487.93" y1="110" x2="487.93" y2="147.8" stroke="#56676e" stroke-width="0.8"/>
<line x1="499.96000000000004" y1="110" x2="499.96000000000004" y2="147.8" stroke="#56676e" stroke-width="0.8"/>
<line x1="511.99" y1="110" x2="511.99" y2="147.8" stroke="#56676e" stroke-width="0.8"/>
<line x1="524.02" y1="110" x2="524.02" y2="147.8" stroke="#56676e" stroke-width="0.8"/>
<line x1="536.05" y1="110" x2="536.05" y2="147.8" stroke="#56676e" stroke-width="0.8"/>
<line x1="548.08" y1="110" x2="548.08" y2="147.8" stroke="#56676e" stroke-width="0.8"/>
<line x1="560.11" y1="110" x2="560.11" y2="147.8" stroke="#56676e" stroke-width="0.8"/>
<line x1="572.14" y1="110" x2="572.14" y2="147.8" stroke="#56676e" stroke-width="0.8"/>
<line x1="584.1700000000001" y1="110" x2="584.1700000000001" y2="147.8" stroke="#56676e" stroke-width="0.8"/>
<line x1="596.2" y1="110" x2="596.2" y2="147.8" stroke="#56676e" stroke-width="0.8"/>
<line x1="608.23" y1="110" x2="608.23" y2="147.8" stroke="#56676e" stroke-width="0.8"/>
<polyline points="354.7,112.6 452.6,112.6 453.7,113.05 454.8,112.14999999999999 455.9,113.05 457.0,112.14999999999999 458.1,113.05 459.2,112.14999999999999 460.3,113.05 461.4,112.14999999999999 462.5,113.05 463.6,112.14999999999999 464.7,113.05 465.8,112.14999999999999 466.9,113.05 468.0,112.14999999999999 469.1,113.05 470.2,112.14999999999999 471.3,113.05 472.4,112.14999999999999 473.5,113.05 474.6,112.14999999999999 475.7,113.05 476.8,112.14999999999999 477.9,113.05 479.0,112.14999999999999 480.1,113.05 481.2,112.14999999999999 482.3,113.05 483.4,112.14999999999999 484.5,113.05 485.6,112.14999999999999 486.7,113.05 487.8,112.14999999999999 488.9,113.05 490.0,112.14999999999999 491.1,113.05 492.2,112.14999999999999 493.3,113.05 494.4,112.14999999999999 495.5,113.05 496.6,112.14999999999999 497.7,113.05 498.8,112.14999999999999 499.9,113.05 501.0,112.14999999999999 606,112.6" stroke="#e4e8ea" stroke-width="1.1" fill="none" stroke-linejoin="round" />
<polyline points="357.5,118.2 452.6,118.2 453.7,118.65 454.8,117.75 455.9,118.65 457.0,117.75 458.1,118.65 459.2,117.75 460.3,118.65 461.4,117.75 462.5,118.65 463.6,117.75 464.7,118.65 465.8,117.75 466.9,118.65 468.0,117.75 469.1,118.65 470.2,117.75 471.3,118.65 472.4,117.75 473.5,118.65 474.6,117.75 475.7,118.65 476.8,117.75 477.9,118.65 479.0,117.75 480.1,118.65 481.2,117.75 482.3,118.65 483.4,117.75 484.5,118.65 485.6,117.75 486.7,118.65 487.8,117.75 488.9,118.65 490.0,117.75 491.1,118.65 492.2,117.75 493.3,118.65 494.4,117.75 495.5,118.65 496.6,117.75 497.7,118.65 498.8,117.75 499.9,118.65 501.0,117.75 606,118.2" stroke="#e4e8ea" stroke-width="1.1" fill="none" stroke-linejoin="round" />
<polyline points="357.5,123.6 452.6,123.6 453.7,124.05 454.8,123.14999999999999 455.9,124.05 457.0,123.14999999999999 458.1,124.05 459.2,123.14999999999999 460.3,124.05 461.4,123.14999999999999 462.5,124.05 463.6,123.14999999999999 464.7,124.05 465.8,123.14999999999999 466.9,124.05 468.0,123.14999999999999 469.1,124.05 470.2,123.14999999999999 471.3,124.05 472.4,123.14999999999999 473.5,124.05 474.6,123.14999999999999 475.7,124.05 476.8,123.14999999999999 477.9,124.05 479.0,123.14999999999999 480.1,124.05 481.2,123.14999999999999 482.3,124.05 483.4,123.14999999999999 484.5,124.05 485.6,123.14999999999999 486.7,124.05 487.8,123.14999999999999 488.9,124.05 490.0,123.14999999999999 491.1,124.05 492.2,123.14999999999999 493.3,124.05 494.4,123.14999999999999 495.5,124.05 496.6,123.14999999999999 497.7,124.05 498.8,123.14999999999999 499.9,124.05 501.0,123.14999999999999 606,123.6" stroke="#e4e8ea" stroke-width="1.1" fill="none" stroke-linejoin="round" />
<polyline points="357.5,129.1 452.6,129.1 453.7,129.54999999999998 454.8,128.65 455.9,129.54999999999998 457.0,128.65 458.1,129.54999999999998 459.2,128.65 460.3,129.54999999999998 461.4,128.65 462.5,129.54999999999998 463.6,128.65 464.7,129.54999999999998 465.8,128.65 466.9,129.54999999999998 468.0,128.65 469.1,129.54999999999998 470.2,128.65 471.3,129.54999999999998 472.4,128.65 473.5,129.54999999999998 474.6,128.65 475.7,129.54999999999998 476.8,128.65 477.9,129.54999999999998 479.0,128.65 480.1,129.54999999999998 481.2,128.65 482.3,129.54999999999998 483.4,128.65 484.5,129.54999999999998 485.6,128.65 486.7,129.54999999999998 487.8,128.65 488.9,129.54999999999998 490.0,128.65 491.1,129.54999999999998 492.2,128.65 493.3,129.54999999999998 494.4,128.65 495.5,129.54999999999998 496.6,128.65 497.7,129.54999999999998 498.8,128.65 499.9,129.54999999999998 501.0,128.65 606,129.1" stroke="#e4e8ea" stroke-width="1.1" fill="none" stroke-linejoin="round" />
<polyline points="357.5,134.8 452.6,134.8 453.7,135.25 454.8,134.35000000000002 455.9,135.25 457.0,134.35000000000002 458.1,135.25 459.2,134.35000000000002 460.3,135.25 461.4,134.35000000000002 462.5,135.25 463.6,134.35000000000002 464.7,135.25 465.8,134.35000000000002 466.9,135.25 468.0,134.35000000000002 469.1,135.25 470.2,134.35000000000002 471.3,135.25 472.4,134.35000000000002 473.5,135.25 474.6,134.35000000000002 475.7,135.25 476.8,134.35000000000002 477.9,135.25 479.0,134.35000000000002 480.1,135.25 481.2,134.35000000000002 482.3,135.25 483.4,134.35000000000002 484.5,135.25 485.6,134.35000000000002 486.7,135.25 487.8,134.35000000000002 488.9,135.25 490.0,134.35000000000002 491.1,135.25 492.2,134.35000000000002 493.3,135.25 494.4,134.35000000000002 495.5,135.25 496.6,134.35000000000002 497.7,135.25 498.8,134.35000000000002 499.9,135.25 501.0,134.35000000000002 606,134.8" stroke="#e4e8ea" stroke-width="1.1" fill="none" stroke-linejoin="round" />
<polyline points="357.5,140.3 452.6,140.3 453.7,140.75 454.8,139.85000000000002 455.9,140.75 457.0,139.85000000000002 458.1,140.75 459.2,139.85000000000002 460.3,140.75 461.4,139.85000000000002 462.5,140.75 463.6,139.85000000000002 464.7,140.75 465.8,139.85000000000002 466.9,140.75 468.0,139.85000000000002 469.1,140.75 470.2,139.85000000000002 471.3,140.75 472.4,139.85000000000002 473.5,140.75 474.6,139.85000000000002 475.7,140.75 476.8,139.85000000000002 477.9,140.75 479.0,139.85000000000002 480.1,140.75 481.2,139.85000000000002 482.3,140.75 483.4,139.85000000000002 484.5,140.75 485.6,139.85000000000002 486.7,140.75 487.8,139.85000000000002 488.9,140.75 490.0,139.85000000000002 491.1,140.75 492.2,139.85000000000002 493.3,140.75 494.4,139.85000000000002 495.5,140.75 496.6,139.85000000000002 497.7,140.75 498.8,139.85000000000002 499.9,140.75 501.0,139.85000000000002 606,140.3" stroke="#e4e8ea" stroke-width="1.1" fill="none" stroke-linejoin="round" />
<polyline points="354.7,145.7 452.6,145.7 453.7,146.14999999999998 454.8,145.25 455.9,146.14999999999998 457.0,145.25 458.1,146.14999999999998 459.2,145.25 460.3,146.14999999999998 461.4,145.25 462.5,146.14999999999998 463.6,145.25 464.7,146.14999999999998 465.8,145.25 466.9,146.14999999999998 468.0,145.25 469.1,146.14999999999998 470.2,145.25 471.3,146.14999999999998 472.4,145.25 473.5,146.14999999999998 474.6,145.25 475.7,146.14999999999998 476.8,145.25 477.9,146.14999999999998 479.0,145.25 480.1,146.14999999999998 481.2,145.25 482.3,146.14999999999998 483.4,145.25 484.5,146.14999999999998 485.6,145.25 486.7,146.14999999999998 487.8,145.25 488.9,146.14999999999998 490.0,145.25 491.1,146.14999999999998 492.2,145.25 493.3,146.14999999999998 494.4,145.25 495.5,146.14999999999998 496.6,145.25 497.7,146.14999999999998 498.8,145.25 499.9,146.14999999999998 501.0,145.25 621,145.7" stroke="#e4e8ea" stroke-width="1.1" fill="none" stroke-linejoin="round" />
<text x="475" y="146.6" font-size="3.4" fill="#9aa8ad" font-family="Liberation Sans" text-anchor="middle" textLength="20" lengthAdjust="spacingAndGlyphs">10.00 mm / sec</text>
<rect x="208.5" y="143" width="24" height="4.6" fill="#3c4f57"/>
<text x="220.5" y="146.6" font-size="3.4" fill="#9aa8ad" font-family="Liberation Sans" text-anchor="middle" textLength="22" lengthAdjust="spacingAndGlyphs">10.00 mm / sec</text>
<line x1="393.4" y1="110" x2="393.4" y2="147.8" stroke="#d61a1a" stroke-width="0.9"/>
<rect x="354.9" y="142.5" width="8" height="5.3" fill="#6f8590"/>
<text x="358.9" y="146.6" font-size="4.0" fill="#e8eef2" font-family="Liberation Sans" text-anchor="middle" textLength="7" lengthAdjust="spacingAndGlyphs">RAW</text>
<rect x="88" y="142.3" width="8.5" height="5.5" fill="#71868f"/>
<text x="92.2" y="146.6" font-size="4.3" fill="#eef2f4" font-family="Liberation Sans" font-weight="bold" text-anchor="middle" textLength="7.5" lengthAdjust="spacingAndGlyphs">LKB</text>
<rect x="603.5" y="112.10000000000001" width="13" height="5.2" fill="#34464e"/>
<text x="616" y="116.3" font-size="4.3" fill="#e0e4e6" font-family="Liberation Sans" font-weight="bold" text-anchor="end" textLength="12" lengthAdjust="spacingAndGlyphs">C4'-C2'</text>
<ellipse cx="618.4" cy="114.7" rx="1.9" ry="2.3" fill="#f0f2f4"/>
<rect x="603.5" y="117.5" width="13" height="5.2" fill="#34464e"/>
<text x="616" y="121.69999999999999" font-size="4.3" fill="#e0e4e6" font-family="Liberation Sans" font-weight="bold" text-anchor="end" textLength="12" lengthAdjust="spacingAndGlyphs">C4'-C2'</text>
<ellipse cx="618.4" cy="120.1" rx="1.9" ry="2.3" fill="#f0f2f4"/>
<rect x="603.5" y="122.9" width="13" height="5.2" fill="#34464e"/>
<text x="616" y="127.1" font-size="4.3" fill="#e0e4e6" font-family="Liberation Sans" font-weight="bold" text-anchor="end" textLength="12" lengthAdjust="spacingAndGlyphs">C4'-C2'</text>
<ellipse cx="618.4" cy="125.5" rx="1.9" ry="2.3" fill="#f0f2f4"/>
<rect x="603.5" y="128.6" width="13" height="5.2" fill="#34464e"/>
<text x="616" y="132.79999999999998" font-size="4.3" fill="#e0e4e6" font-family="Liberation Sans" font-weight="bold" text-anchor="end" textLength="12" lengthAdjust="spacingAndGlyphs">C4-CZ'</text>
<ellipse cx="618.4" cy="131.2" rx="1.9" ry="2.3" fill="#f0f2f4"/>
<rect x="603.5" y="134.1" width="13" height="5.2" fill="#34464e"/>
<text x="616" y="138.29999999999998" font-size="4.3" fill="#e0e4e6" font-family="Liberation Sans" font-weight="bold" text-anchor="end" textLength="12" lengthAdjust="spacingAndGlyphs">C4-CZ'</text>
<ellipse cx="618.4" cy="136.7" rx="1.9" ry="2.3" fill="#f0f2f4"/>
<rect x="603.5" y="139.8" width="13" height="5.2" fill="#34464e"/>
<text x="616" y="144.0" font-size="4.3" fill="#e0e4e6" font-family="Liberation Sans" font-weight="bold" text-anchor="end" textLength="12" lengthAdjust="spacingAndGlyphs">C3-C2'</text>
<ellipse cx="618.4" cy="142.4" rx="1.9" ry="2.3" fill="#f0f2f4"/>
<rect x="86.5" y="150.1" width="379" height="8.1" fill="#587481"/>
<rect x="86.5" y="270.5" width="379" height="8.7" fill="#587481"/>
<rect x="199.5" y="158" width="1.5" height="232.5" fill="#70909c"/>
<rect x="306.3" y="158" width="1.7" height="232.5" fill="#8fb0bd"/>
<rect x="86.5" y="158" width="1.5" height="232.5" fill="#8fb0bd"/>
<rect x="464.8" y="150" width="1.5" height="241" fill="#70909c"/>
<rect x="86.2" y="150.1" width="114.3" height="8.1" fill="#9c27b0"/>
<rect x="86.3" y="150.1" width="1.5" height="121" fill="#9c27b0"/>
<rect x="199.0" y="150.1" width="1.4" height="121" fill="#9c27b0"/>
<rect x="86.2" y="269.5" width="114.3" height="1.5" fill="#9c27b0"/>
<rect x="88" y="158.2" width="110.9" height="111.3" fill="#3c4f57"/>
<line x1="110.18" y1="158.2" x2="110.18" y2="269.5" stroke="#6b797d" stroke-width="0.9"/>
<line x1="88" y1="180.45999999999998" x2="198.9" y2="180.45999999999998" stroke="#6b797d" stroke-width="0.9"/>
<line x1="132.36" y1="158.2" x2="132.36" y2="269.5" stroke="#6b797d" stroke-width="0.9"/>
<line x1="88" y1="202.72" x2="198.9" y2="202.72" stroke="#6b797d" stroke-width="0.9"/>
<line x1="154.54000000000002" y1="158.2" x2="154.54000000000002" y2="269.5" stroke="#6b797d" stroke-width="0.9"/>
<line x1="88" y1="224.98" x2="198.9" y2="224.98" stroke="#6b797d" stroke-width="0.9"/>
<line x1="176.72000000000003" y1="158.2" x2="176.72000000000003" y2="269.5" stroke="#6b797d" stroke-width="0.9"/>
<line x1="88" y1="247.24" x2="198.9" y2="247.24" stroke="#6b797d" stroke-width="0.9"/>
<path d="M88.2,158.6 h2.8 l-2.0,4.4 z" fill="#ffffff" />
<rect x="88.2" y="262.9" width="8.4" height="6.3" fill="#71878f"/>
<text x="92.4" y="267.5" font-size="4.4" fill="#f0f4f6" font-family="Liberation Sans" font-weight="bold" text-anchor="middle" textLength="7.4" lengthAdjust="spacingAndGlyphs">AVG</text>
<text x="110.18" y="267.7" font-size="3.9" fill="#9aa8ad" font-family="Liberation Sans" text-anchor="middle">16</text>
<text x="132.36" y="267.7" font-size="3.9" fill="#9aa8ad" font-family="Liberation Sans" text-anchor="middle">32</text>
<text x="154.54000000000002" y="267.7" font-size="3.9" fill="#9aa8ad" font-family="Liberation Sans" text-anchor="middle">48</text>
<text x="176.72000000000003" y="267.7" font-size="3.9" fill="#9aa8ad" font-family="Liberation Sans" text-anchor="middle">64</text>
<text x="196.68200000000002" y="267.7" font-size="3.9" fill="#9aa8ad" font-family="Liberation Sans" text-anchor="middle">80</text>
<rect x="201" y="158.2" width="105.30000000000001" height="111.3" fill="#3c4f57"/>
<line x1="222.06" y1="158.2" x2="222.06" y2="269.5" stroke="#6b797d" stroke-width="0.9"/>
<line x1="201" y1="180.45999999999998" x2="306.3" y2="180.45999999999998" stroke="#6b797d" stroke-width="0.9"/>
<line x1="243.12" y1="158.2" x2="243.12" y2="269.5" stroke="#6b797d" stroke-width="0.9"/>
<line x1="201" y1="202.72" x2="306.3" y2="202.72" stroke="#6b797d" stroke-width="0.9"/>
<line x1="264.18" y1="158.2" x2="264.18" y2="269.5" stroke="#6b797d" stroke-width="0.9"/>
<line x1="201" y1="224.98" x2="306.3" y2="224.98" stroke="#6b797d" stroke-width="0.9"/>
<line x1="285.24" y1="158.2" x2="285.24" y2="269.5" stroke="#6b797d" stroke-width="0.9"/>
<line x1="201" y1="247.24" x2="306.3" y2="247.24" stroke="#6b797d" stroke-width="0.9"/>
<path d="M201.2,158.6 h2.8 l-2.0,4.4 z" fill="#ffffff" />
<rect x="201.2" y="262.9" width="8.4" height="6.3" fill="#71878f"/>
<text x="205.4" y="267.5" font-size="4.4" fill="#f0f4f6" font-family="Liberation Sans" font-weight="bold" text-anchor="middle" textLength="7.4" lengthAdjust="spacingAndGlyphs">AVG</text>
<text x="222.06" y="267.7" font-size="3.9" fill="#9aa8ad" font-family="Liberation Sans" text-anchor="middle">16</text>
<text x="243.12" y="267.7" font-size="3.9" fill="#9aa8ad" font-family="Liberation Sans" text-anchor="middle">32</text>
<text x="264.18" y="267.7" font-size="3.9" fill="#9aa8ad" font-family="Liberation Sans" text-anchor="middle">48</text>
<text x="285.24" y="267.7" font-size="3.9" fill="#9aa8ad" font-family="Liberation Sans" text-anchor="middle">64</text>
<text x="304.194" y="267.7" font-size="3.9" fill="#9aa8ad" font-family="Liberation Sans" text-anchor="middle">80</text>
<rect x="308" y="158.2" width="156.8" height="111.3" fill="#3c4f57"/>
<line x1="339.36" y1="158.2" x2="339.36" y2="269.5" stroke="#6b797d" stroke-width="0.9"/>
<line x1="308" y1="180.45999999999998" x2="464.8" y2="180.45999999999998" stroke="#6b797d" stroke-width="0.9"/>
<line x1="370.72" y1="158.2" x2="370.72" y2="269.5" stroke="#6b797d" stroke-width="0.9"/>
<line x1="308" y1="202.72" x2="464.8" y2="202.72" stroke="#6b797d" stroke-width="0.9"/>
<line x1="402.08" y1="158.2" x2="402.08" y2="269.5" stroke="#6b797d" stroke-width="0.9"/>
<line x1="308" y1="224.98" x2="464.8" y2="224.98" stroke="#6b797d" stroke-width="0.9"/>
<line x1="433.44" y1="158.2" x2="433.44" y2="269.5" stroke="#6b797d" stroke-width="0.9"/>
<line x1="308" y1="247.24" x2="464.8" y2="247.24" stroke="#6b797d" stroke-width="0.9"/>
<path d="M308.2,158.6 h2.8 l-2.0,4.4 z" fill="#ffffff" />
<rect x="308.2" y="262.9" width="8.4" height="6.3" fill="#71878f"/>
<text x="312.4" y="267.5" font-size="4.4" fill="#f0f4f6" font-family="Liberation Sans" font-weight="bold" text-anchor="middle" textLength="7.4" lengthAdjust="spacingAndGlyphs">AVG</text>
<text x="339.36" y="267.7" font-size="3.4" fill="#7f8f95" font-family="Liberation Sans" text-anchor="middle">2</text>
<text x="370.72" y="267.7" font-size="3.4" fill="#7f8f95" font-family="Liberation Sans" text-anchor="middle">4</text>
<text x="402.08" y="267.7" font-size="3.4" fill="#7f8f95" font-family="Liberation Sans" text-anchor="middle">6</text>
<text x="433.44" y="267.7" font-size="3.4" fill="#7f8f95" font-family="Liberation Sans" text-anchor="middle">8</text>
<text x="461.664" y="267.7" font-size="3.4" fill="#7f8f95" font-family="Liberation Sans" text-anchor="middle">10</text>
<rect x="88" y="279.2" width="111.5" height="111.2" fill="#3c4f57"/>
<line x1="110.3" y1="279.2" x2="110.3" y2="390.4" stroke="#6b797d" stroke-width="0.9"/>
<line x1="88" y1="301.44" x2="199.5" y2="301.44" stroke="#6b797d" stroke-width="0.9"/>
<line x1="132.6" y1="279.2" x2="132.6" y2="390.4" stroke="#6b797d" stroke-width="0.9"/>
<line x1="88" y1="323.68" x2="199.5" y2="323.68" stroke="#6b797d" stroke-width="0.9"/>
<line x1="154.89999999999998" y1="279.2" x2="154.89999999999998" y2="390.4" stroke="#6b797d" stroke-width="0.9"/>
<line x1="88" y1="345.91999999999996" x2="199.5" y2="345.91999999999996" stroke="#6b797d" stroke-width="0.9"/>
<line x1="177.2" y1="279.2" x2="177.2" y2="390.4" stroke="#6b797d" stroke-width="0.9"/>
<line x1="88" y1="368.15999999999997" x2="199.5" y2="368.15999999999997" stroke="#6b797d" stroke-width="0.9"/>
<path d="M88.2,279.59999999999997 h2.8 l-2.0,4.4 z" fill="#ffffff" />
<rect x="88.2" y="383.79999999999995" width="8.4" height="6.3" fill="#71878f"/>
<text x="92.4" y="388.4" font-size="4.4" fill="#f0f4f6" font-family="Liberation Sans" font-weight="bold" text-anchor="middle" textLength="7.4" lengthAdjust="spacingAndGlyphs">AVG</text>
<text x="110.3" y="388.59999999999997" font-size="3.9" fill="#9aa8ad" font-family="Liberation Sans" text-anchor="middle">16</text>
<text x="132.6" y="388.59999999999997" font-size="3.9" fill="#9aa8ad" font-family="Liberation Sans" text-anchor="middle">32</text>
<text x="154.89999999999998" y="388.59999999999997" font-size="3.9" fill="#9aa8ad" font-family="Liberation Sans" text-anchor="middle">48</text>
<text x="177.2" y="388.59999999999997" font-size="3.9" fill="#9aa8ad" font-family="Liberation Sans" text-anchor="middle">64</text>
<text x="197.26999999999998" y="388.59999999999997" font-size="3.9" fill="#9aa8ad" font-family="Liberation Sans" text-anchor="middle">80</text>
<rect x="201" y="279.2" width="105.30000000000001" height="111.2" fill="#3c4f57"/>
<line x1="222.06" y1="279.2" x2="222.06" y2="390.4" stroke="#6b797d" stroke-width="0.9"/>
<line x1="201" y1="301.44" x2="306.3" y2="301.44" stroke="#6b797d" stroke-width="0.9"/>
<line x1="243.12" y1="279.2" x2="243.12" y2="390.4" stroke="#6b797d" stroke-width="0.9"/>
<line x1="201" y1="323.68" x2="306.3" y2="323.68" stroke="#6b797d" stroke-width="0.9"/>
<line x1="264.18" y1="279.2" x2="264.18" y2="390.4" stroke="#6b797d" stroke-width="0.9"/>
<line x1="201" y1="345.91999999999996" x2="306.3" y2="345.91999999999996" stroke="#6b797d" stroke-width="0.9"/>
<line x1="285.24" y1="279.2" x2="285.24" y2="390.4" stroke="#6b797d" stroke-width="0.9"/>
<line x1="201" y1="368.15999999999997" x2="306.3" y2="368.15999999999997" stroke="#6b797d" stroke-width="0.9"/>
<path d="M201.2,279.59999999999997 h2.8 l-2.0,4.4 z" fill="#ffffff" />
<rect x="201.2" y="383.79999999999995" width="8.4" height="6.3" fill="#71878f"/>
<text x="205.4" y="388.4" font-size="4.4" fill="#f0f4f6" font-family="Liberation Sans" font-weight="bold" text-anchor="middle" textLength="7.4" lengthAdjust="spacingAndGlyphs">AVG</text>
<text x="222.06" y="388.59999999999997" font-size="3.9" fill="#9aa8ad" font-family="Liberation Sans" text-anchor="middle">16</text>
<text x="243.12" y="388.59999999999997" font-size="3.9" fill="#9aa8ad" font-family="Liberation Sans" text-anchor="middle">32</text>
<text x="264.18" y="388.59999999999997" font-size="3.9" fill="#9aa8ad" font-family="Liberation Sans" text-anchor="middle">48</text>
<text x="285.24" y="388.59999999999997" font-size="3.9" fill="#9aa8ad" font-family="Liberation Sans" text-anchor="middle">64</text>
<text x="304.194" y="388.59999999999997" font-size="3.9" fill="#9aa8ad" font-family="Liberation Sans" text-anchor="middle">80</text>
<rect x="308" y="279.2" width="156.8" height="111.2" fill="#3c4f57"/>
<line x1="339.36" y1="279.2" x2="339.36" y2="390.4" stroke="#6b797d" stroke-width="0.9"/>
<line x1="308" y1="301.44" x2="464.8" y2="301.44" stroke="#6b797d" stroke-width="0.9"/>
<line x1="370.72" y1="279.2" x2="370.72" y2="390.4" stroke="#6b797d" stroke-width="0.9"/>
<line x1="308" y1="323.68" x2="464.8" y2="323.68" stroke="#6b797d" stroke-width="0.9"/>
<line x1="402.08" y1="279.2" x2="402.08" y2="390.4" stroke="#6b797d" stroke-width="0.9"/>
<line x1="308" y1="345.91999999999996" x2="464.8" y2="345.91999999999996" stroke="#6b797d" stroke-width="0.9"/>
<line x1="433.44" y1="279.2" x2="433.44" y2="390.4" stroke="#6b797d" stroke-width="0.9"/>
<line x1="308" y1="368.15999999999997" x2="464.8" y2="368.15999999999997" stroke="#6b797d" stroke-width="0.9"/>
<path d="M308.2,279.59999999999997 h2.8 l-2.0,4.4 z" fill="#ffffff" />
<rect x="308.2" y="383.79999999999995" width="8.4" height="6.3" fill="#71878f"/>
<text x="312.4" y="388.4" font-size="4.4" fill="#f0f4f6" font-family="Liberation Sans" font-weight="bold" text-anchor="middle" textLength="7.4" lengthAdjust="spacingAndGlyphs">AVG</text>
<text x="339.36" y="388.59999999999997" font-size="3.4" fill="#7f8f95" font-family="Liberation Sans" text-anchor="middle">2</text>
<text x="370.72" y="388.59999999999997" font-size="3.4" fill="#7f8f95" font-family="Liberation Sans" text-anchor="middle">4</text>
<text x="402.08" y="388.59999999999997" font-size="3.4" fill="#7f8f95" font-family="Liberation Sans" text-anchor="middle">6</text>
<text x="433.44" y="388.59999999999997" font-size="3.4" fill="#7f8f95" font-family="Liberation Sans" text-anchor="middle">8</text>
<text x="461.664" y="388.59999999999997" font-size="3.4" fill="#7f8f95" font-family="Liberation Sans" text-anchor="middle">10</text>
<text x="89.6" y="155.6" font-size="4.8" fill="#ffffff" font-family="Liberation Sans" font-weight="bold" text-anchor="middle">8</text>
<rect x="93.1" y="152.1" width="9.6" height="4.6" fill="#c41a35" rx="0.8"/>
<text x="97.89999999999999" y="155.9" font-size="4.3" fill="#ffffff" font-family="Liberation Sans" font-weight="bold" text-anchor="middle" textLength="7.5" lengthAdjust="spacingAndGlyphs">SEP</text>
<text x="104.8" y="155.6" font-size="5.0" fill="#ffffff" font-family="Liberation Sans" font-weight="bold" textLength="15.84" lengthAdjust="spacingAndGlyphs">Median L</text>
<rect x="175.2" y="151.6" width="4.2" height="4.6" fill="#ffffff" rx="0.6"/>
<path d="M176.5,152.7 l1.7,1.2 l-1.7,1.2 z" fill="#9c27b0" />
<rect x="181.2" y="151.6" width="4.2" height="4.6" fill="#ffffff" rx="0.6"/>
<path d="M184.1,152.7 l-1.7,1.2 l1.7,1.2 z" fill="#9c27b0" />
<rect x="187.3" y="153.5" width="3.6" height="0.9" fill="#ffffff"/>
<rect x="193.3" y="151.9" width="3.6" height="4" fill="none" rx="0.5" stroke="#ffffff" stroke-width="0.7"/>
<rect x="194.2" y="152.9" width="1.8" height="2" fill="#ffffff" opacity="0.6"/>
<text x="203.10000000000002" y="155.6" font-size="4.8" fill="#ffffff" font-family="Liberation Sans" font-weight="bold" text-anchor="middle">3</text>
<rect x="206.60000000000002" y="152.1" width="9.6" height="4.6" fill="#c41a35" rx="0.8"/>
<text x="211.4" y="155.9" font-size="4.3" fill="#ffffff" font-family="Liberation Sans" font-weight="bold" text-anchor="middle" textLength="7.5" lengthAdjust="spacingAndGlyphs">SEP</text>
<text x="218.3" y="155.6" font-size="5.0" fill="#ffffff" font-family="Liberation Sans" font-weight="bold" textLength="15.84" lengthAdjust="spacingAndGlyphs">Median R</text>
<rect x="281.5" y="151.6" width="4.2" height="4.6" fill="#ffffff" rx="0.6"/>
<path d="M282.8,152.7 l1.7,1.2 l-1.7,1.2 z" fill="#587481" />
<rect x="287.3" y="151.6" width="4.2" height="4.6" fill="#ffffff" rx="0.6"/>
<path d="M290.2,152.7 l-1.7,1.2 l1.7,1.2 z" fill="#587481" />
<rect x="293.6" y="153.5" width="3.6" height="0.9" fill="#ffffff"/>
<rect x="300.0" y="151.9" width="3.6" height="4" fill="none" rx="0.5" stroke="#ffffff" stroke-width="0.7"/>
<rect x="300.9" y="152.9" width="1.8" height="2" fill="#ffffff" opacity="0.6"/>
<text x="309.40000000000003" y="155.6" font-size="4.8" fill="#ffffff" font-family="Liberation Sans" font-weight="bold" text-anchor="middle">5</text>
<rect x="312.90000000000003" y="152.1" width="9.6" height="4.6" fill="#f2b90c" rx="0.8"/>
<text x="317.70000000000005" y="155.9" font-size="4.3" fill="#333333" font-family="Liberation Sans" font-weight="bold" text-anchor="middle" textLength="7.5" lengthAdjust="spacingAndGlyphs">AEP</text>
<text x="324.6" y="155.6" font-size="5.0" fill="#ffffff" font-family="Liberation Sans" font-weight="bold" textLength="7.92" lengthAdjust="spacingAndGlyphs">left</text>
<rect x="440.8" y="151.6" width="4.2" height="4.6" fill="#ffffff" rx="0.6"/>
<path d="M442.1,152.7 l1.7,1.2 l-1.7,1.2 z" fill="#587481" />
<rect x="446.6" y="151.6" width="4.2" height="4.6" fill="#ffffff" rx="0.6"/>
<path d="M449.5,152.7 l-1.7,1.2 l1.7,1.2 z" fill="#587481" />
<rect x="453" y="153.5" width="3.6" height="0.9" fill="#ffffff"/>
<rect x="459.1" y="151.9" width="3.6" height="4" fill="none" rx="0.5" stroke="#ffffff" stroke-width="0.7"/>
<rect x="460.0" y="152.9" width="1.8" height="2" fill="#ffffff" opacity="0.6"/>
<text x="89.6" y="276.7" font-size="4.8" fill="#ffffff" font-family="Liberation Sans" font-weight="bold" text-anchor="middle">2</text>
<rect x="93.1" y="273.2" width="9.6" height="4.6" fill="#c41a35" rx="0.8"/>
<text x="97.89999999999999" y="277.0" font-size="4.3" fill="#ffffff" font-family="Liberation Sans" font-weight="bold" text-anchor="middle" textLength="7.5" lengthAdjust="spacingAndGlyphs">SEP</text>
<text x="104.8" y="276.7" font-size="5.0" fill="#ffffff" font-family="Liberation Sans" font-weight="bold" textLength="15.84" lengthAdjust="spacingAndGlyphs">Tibial L</text>
<rect x="175.2" y="272.7" width="4.2" height="4.6" fill="#ffffff" rx="0.6"/>
<path d="M176.5,273.8 l1.7,1.2 l-1.7,1.2 z" fill="#587481" />
<rect x="181.2" y="272.7" width="4.2" height="4.6" fill="#ffffff" rx="0.6"/>
<path d="M184.1,273.8 l-1.7,1.2 l1.7,1.2 z" fill="#587481" />
<rect x="187.3" y="274.59999999999997" width="3.6" height="0.9" fill="#ffffff"/>
<rect x="193.3" y="273.0" width="3.6" height="4" fill="none" rx="0.5" stroke="#ffffff" stroke-width="0.7"/>
<rect x="194.2" y="274.0" width="1.8" height="2" fill="#ffffff" opacity="0.6"/>
<text x="203.10000000000002" y="276.7" font-size="4.8" fill="#ffffff" font-family="Liberation Sans" font-weight="bold" text-anchor="middle">4</text>
<rect x="206.60000000000002" y="273.2" width="9.6" height="4.6" fill="#c41a35" rx="0.8"/>
<text x="211.4" y="277.0" font-size="4.3" fill="#ffffff" font-family="Liberation Sans" font-weight="bold" text-anchor="middle" textLength="7.5" lengthAdjust="spacingAndGlyphs">SEP</text>
<text x="218.3" y="276.7" font-size="5.0" fill="#ffffff" font-family="Liberation Sans" font-weight="bold" textLength="15.84" lengthAdjust="spacingAndGlyphs">Tibial R</text>
<rect x="281.5" y="272.7" width="4.2" height="4.6" fill="#ffffff" rx="0.6"/>
<path d="M282.8,273.8 l1.7,1.2 l-1.7,1.2 z" fill="#587481" />
<rect x="287.3" y="272.7" width="4.2" height="4.6" fill="#ffffff" rx="0.6"/>
<path d="M290.2,273.8 l-1.7,1.2 l1.7,1.2 z" fill="#587481" />
<rect x="293.6" y="274.59999999999997" width="3.6" height="0.9" fill="#ffffff"/>
<rect x="300.0" y="273.0" width="3.6" height="4" fill="none" rx="0.5" stroke="#ffffff" stroke-width="0.7"/>
<rect x="300.9" y="274.0" width="1.8" height="2" fill="#ffffff" opacity="0.6"/>
<text x="309.40000000000003" y="276.7" font-size="4.8" fill="#ffffff" font-family="Liberation Sans" font-weight="bold" text-anchor="middle">6</text>
<rect x="312.90000000000003" y="273.2" width="9.6" height="4.6" fill="#f2b90c" rx="0.8"/>
<text x="317.70000000000005" y="277.0" font-size="4.3" fill="#333333" font-family="Liberation Sans" font-weight="bold" text-anchor="middle" textLength="7.5" lengthAdjust="spacingAndGlyphs">AEP</text>
<text x="324.6" y="276.7" font-size="5.0" fill="#ffffff" font-family="Liberation Sans" font-weight="bold" textLength="9.9" lengthAdjust="spacingAndGlyphs">right</text>
<rect x="440.8" y="272.7" width="4.2" height="4.6" fill="#ffffff" rx="0.6"/>
<path d="M442.1,273.8 l1.7,1.2 l-1.7,1.2 z" fill="#587481" />
<rect x="446.6" y="272.7" width="4.2" height="4.6" fill="#ffffff" rx="0.6"/>
<path d="M449.5,273.8 l-1.7,1.2 l1.7,1.2 z" fill="#587481" />
<rect x="453" y="274.59999999999997" width="3.6" height="0.9" fill="#ffffff"/>
<rect x="459.1" y="273.0" width="3.6" height="4" fill="none" rx="0.5" stroke="#ffffff" stroke-width="0.7"/>
<rect x="460.0" y="274.0" width="1.8" height="2" fill="#ffffff" opacity="0.6"/>
<polyline points="89,214.8 91.1,214.6 93.0,213.25 94.9,212.4 96.8,212.86 98.7,214.3 100.3,213.26 101.9,211.8 103.5,211.7 105.1,212.8 106.6,211.02 108.1,208.95 109.6,207.3 111.2,204.43 112.8,202.8 115.3,213 117.8,232.8 119.4,229.31 121,225.8 122.6,221.95 124.2,219.4 126.8,210.5 128.4,205.96 130,201.6 132.5,197.7 135,198.4 136.6,200.0 138.2,202.8 140.1,200.9 142.6,205.4 144.15,206.73 145.7,209.2 147.3,211.34 148.9,213.7 150.8,215.11 152.7,215.6 154,214.3 156.6,217.5 158.15,218.22 159.7,220 161.0,218.81 162.3,218.4 164.2,217.9 166.1,220 167.7,221.03 169.3,221.7 171.2,219.4 172.8,221.43 174.4,222.2 176.3,222.51 178.2,222.6 179.5,222.11 180.8,221.9 182,223.2 184,217.5 185.9,216.6 187.8,215.6 189.7,213.7 192.2,211.8 194.1,212.12 196,211.1" stroke="#1f3370" stroke-width="2.45" fill="none" stroke-linejoin="round" stroke-linecap="round" opacity="0.55"/>
<polyline points="89,214.8 91.1,214.6 93.0,213.25 94.9,212.4 96.8,212.86 98.7,214.3 100.3,213.26 101.9,211.8 103.5,211.7 105.1,212.8 106.6,211.02 108.1,208.95 109.6,207.3 111.2,204.43 112.8,202.8 115.3,213 117.8,232.8 119.4,229.31 121,225.8 122.6,221.95 124.2,219.4 126.8,210.5 128.4,205.96 130,201.6 132.5,197.7 135,198.4 136.6,200.0 138.2,202.8 140.1,200.9 142.6,205.4 144.15,206.73 145.7,209.2 147.3,211.34 148.9,213.7 150.8,215.11 152.7,215.6 154,214.3 156.6,217.5 158.15,218.22 159.7,220 161.0,218.81 162.3,218.4 164.2,217.9 166.1,220 167.7,221.03 169.3,221.7 171.2,219.4 172.8,221.43 174.4,222.2 176.3,222.51 178.2,222.6 179.5,222.11 180.8,221.9 182,223.2 184,217.5 185.9,216.6 187.8,215.6 189.7,213.7 192.2,211.8 194.1,212.12 196,211.1" stroke="#f4ee12" stroke-width="1.45" fill="none" stroke-linejoin="round" stroke-linecap="round"/>
<ellipse cx="196" cy="211.1" rx="2.1" ry="2.5" fill="#f4ee12"/>
<text x="113" y="200.4" font-size="3.9" fill="#ffffff" font-family="Liberation Sans" font-weight="bold" text-anchor="middle" textLength="19" lengthAdjust="spacingAndGlyphs">N20  16.5ms</text>
<ellipse cx="112.8" cy="202.8" rx="0.6" ry="0.6" fill="#ffffff"/>
<text x="120.5" y="238.2" font-size="3.9" fill="#ffffff" font-family="Liberation Sans" font-weight="bold" text-anchor="middle" textLength="10" lengthAdjust="spacingAndGlyphs">4.27µV</text>
<ellipse cx="117.8" cy="232.8" rx="0.6" ry="0.6" fill="#ffffff"/>
<text x="185.5" y="211.3" font-size="3.7" fill="#f4ee12" font-family="Liberation Sans" font-weight="bold" text-anchor="middle" textLength="18" lengthAdjust="spacingAndGlyphs">9:06:26.606</text>
<text x="193" y="217.5" font-size="3.7" fill="#f4ee12" font-family="Liberation Sans" font-weight="bold" text-anchor="middle" textLength="8" lengthAdjust="spacingAndGlyphs">(24.4?)</text>
<path d="M89.8,195.5 l1.3,-2.2 l1.3,2.2 z" fill="#c9d3d8" />
<path d="M89.8,232.8 l1.3,2.2 l1.3,-2.2 z" fill="#c9d3d8" />
<text font-size="3.6" fill="#a8b6bb" font-family="Liberation Sans" transform="translate(91.0,225) rotate(-90)" textLength="24" lengthAdjust="spacingAndGlyphs">1 µV / Div</text>
<path d="M127.6,260.9 l-1.8,1.7 l1.8,1.7 z" fill="#c8d2d6" />
<path d="M159.3,260.9 l1.8,1.7 l-1.8,1.7 z" fill="#c8d2d6" />
<polyline points="202.5,213 205.1,213 207.6,214.3 208.9,213.85 210.2,214.66 211.5,214.3 213.05,214.09 214.6,214.3 216.2,214.44 217.8,215.3 220.4,211.1 222.9,217.5 224.5,216.17 226.1,215.6 227.7,213.51 229.3,211.8 231.8,207.3 234.4,210.5 236.9,218.1 238.9,224.5 240.45,223.87 242,222.6 243.3,221.01 244.6,220.15 245.9,218.8 247.45,216.99 249,214.9 250.75,213.82 252.5,213 254.45,211.45 256.4,209.8 258.3,208.76 260.2,208.6 261.8,207.71 263.4,207.7 265.3,209.76 267.2,212.4 269.1,210.5 271.0,211.43 272.9,212 274.6,212.36 276.3,212.68 278,213.3 279.3,214.54 280.6,215.6 282.5,216.15 284.4,216.8 286.3,216.0 288.2,215.6 290.1,216.49 292,216.8 293.7,215.97 295.4,214.48 297.1,213.7" stroke="#2ec02e" stroke-width="1.2" fill="none" stroke-linejoin="round" />
<polyline points="202.5,214.3 205.1,214.9 207.6,215.6 210.2,214 212.1,215.6 213.7,214.37 215.3,213 217.8,214.6 219.4,213.73 221,212.8 223.6,213.7 225.5,213 227.4,214 229.0,211.03 230.6,207.3 232.2,204.98 233.8,202.2 235.7,213 237.6,228.3 238.9,231.5 240.45,229.69 242,228.3 243.6,225.58 245.2,221.9 246.5,218.97 247.8,216.8 249.4,214.22 251,211.8 252.5,208.6 254.1,206.91 255.7,204.7 257.3,204.35 258.9,204.7 260.5,204.54 262.1,204.4 263.7,204.29 265.3,205.1 266.9,207.32 268.5,209.2 270.1,210.76 271.7,211.8 273.6,212.17 275.5,212.4 277.4,214.03 279.3,214.9 280.9,215.36 282.5,216.2 284.4,216.85 286.3,217.1 287.9,216.09 289.5,214.9 291.1,216.28 292.7,217.5 294.3,217.01 295.9,216.6 298,215.5" stroke="#ee1d1d" stroke-width="1.45" fill="none" stroke-linejoin="round" />
<ellipse cx="302.5" cy="211.1" rx="2.1" ry="2.5" fill="#ee1d1d"/>
<text x="233.5" y="200.4" font-size="3.9" fill="#ffffff" font-family="Liberation Sans" font-weight="bold" text-anchor="middle" textLength="19" lengthAdjust="spacingAndGlyphs">N20  16.6ms</text>
<text x="239.5" y="236.5" font-size="3.9" fill="#ffffff" font-family="Liberation Sans" font-weight="bold" text-anchor="middle" textLength="10" lengthAdjust="spacingAndGlyphs">4.93µV</text>
<text x="290.5" y="211.3" font-size="3.7" fill="#ee1d1d" font-family="Liberation Sans" font-weight="bold" text-anchor="middle" textLength="18" lengthAdjust="spacingAndGlyphs">11:45:52.466</text>
<text x="300" y="217.5" font-size="3.7" fill="#ee1d1d" font-family="Liberation Sans" font-weight="bold" text-anchor="middle" textLength="10" lengthAdjust="spacingAndGlyphs">C3'-FZ'</text>
<text font-size="3.6" fill="#a8b6bb" font-family="Liberation Sans" transform="translate(204.0,225) rotate(-90)" textLength="24" lengthAdjust="spacingAndGlyphs">1 µV / Div</text>
<clipPath id="r1"><rect x="308" y="158.2" width="156.8" height="111.3"/></clipPath>
<clipPath id="r2"><rect x="308" y="279.2" width="156.8" height="111.2"/></clipPath>
<g clip-path="url(#r1)"><path d="M309,206 C309.35,205.93 309.90,206.30 311.1,205.6 C312.30,204.90 314.40,201.48 316.2,201.8 C318.00,202.12 320.32,207.08 321.9,207.5 C323.48,207.92 324.22,205.72 325.7,204.3 C327.18,202.88 329.08,199.10 330.8,199 C332.52,198.90 334.30,202.60 336,203.7 C337.70,204.80 339.42,205.67 341,205.6 C342.58,205.53 344.00,203.88 345.5,203.3 C347.00,202.72 348.62,201.52 350,202.1 C351.38,202.68 352.63,205.32 353.8,206.8 C354.97,208.28 355.83,211.63 357,211 C358.17,210.37 359.43,205.65 360.8,203 C362.17,200.35 363.72,194.88 365.2,195.1 C366.68,195.32 368.42,201.82 369.7,204.3 C370.98,206.78 371.63,209.78 372.9,210 C374.17,210.22 375.72,206.92 377.3,205.6 C378.88,204.28 380.95,202.42 382.4,202.1 C383.85,201.78 384.73,203.80 386,203.7 C387.27,203.60 388.60,202.48 390,201.5 C391.40,200.52 393.07,197.37 394.4,197.8 C395.73,198.23 396.65,201.85 398,204.1 C399.35,206.35 400.68,209.05 402.5,211.3 C404.32,213.55 406.65,216.45 408.9,217.6 C411.15,218.75 414.20,218.05 416,218.2 C417.80,218.35 418.48,217.90 419.7,218.5 C420.92,219.10 421.95,222.10 423.3,221.8 C424.65,221.50 426.45,220.25 427.8,216.7 C429.15,213.15 430.35,206.20 431.4,200.5 C432.45,194.80 433.05,189.12 434.1,182.5 C435.15,175.88 436.80,165.38 437.7,160.8 C438.60,156.22 438.95,157.13 439.5,155 C440.05,152.87 440.75,149.17 441,148" fill="none" stroke="#1a1ae0" stroke-width="1.5"/><path d="M456,148 C456.27,149.53 456.88,154.17 457.6,157.2 C458.32,160.23 459.10,161.23 460.3,166.2 C461.50,171.17 464.05,183.53 464.8,187" fill="none" stroke="#1a1ae0" stroke-width="1.5"/></g>
<g clip-path="url(#r2)"><path d="M309,327 C309.35,326.93 309.90,327.30 311.1,326.6 C312.30,325.90 314.40,322.48 316.2,322.8 C318.00,323.12 320.32,328.08 321.9,328.5 C323.48,328.92 324.22,326.72 325.7,325.3 C327.18,323.88 329.08,320.10 330.8,320 C332.52,319.90 334.30,323.60 336,324.7 C337.70,325.80 339.42,326.67 341,326.6 C342.58,326.53 344.00,324.88 345.5,324.3 C347.00,323.72 348.62,322.52 350,323.1 C351.38,323.68 352.63,326.32 353.8,327.8 C354.97,329.28 355.83,332.63 357,332 C358.17,331.37 359.43,326.65 360.8,324 C362.17,321.35 363.72,315.88 365.2,316.1 C366.68,316.32 368.42,322.82 369.7,325.3 C370.98,327.78 371.63,330.78 372.9,331 C374.17,331.22 375.72,327.92 377.3,326.6 C378.88,325.28 380.95,323.42 382.4,323.1 C383.85,322.78 384.73,324.80 386,324.7 C387.27,324.60 388.60,323.48 390,322.5 C391.40,321.52 393.07,318.37 394.4,318.8 C395.73,319.23 396.65,322.85 398,325.1 C399.35,327.35 400.68,330.05 402.5,332.3 C404.32,334.55 406.65,337.45 408.9,338.6 C411.15,339.75 414.20,339.05 416,339.2 C417.80,339.35 418.48,338.90 419.7,339.5 C420.92,340.10 421.95,343.10 423.3,342.8 C424.65,342.50 426.45,341.25 427.8,337.7 C429.15,334.15 430.35,327.20 431.4,321.5 C432.45,315.80 433.05,310.12 434.1,303.5 C435.15,296.88 436.80,286.38 437.7,281.8 C438.60,277.22 438.95,278.13 439.5,276 C440.05,273.87 440.75,270.17 441,269" fill="none" stroke="#ee1d1d" stroke-width="1.5"/><path d="M456,269 C456.27,270.53 456.88,275.17 457.6,278.2 C458.32,281.23 459.10,282.23 460.3,287.2 C461.50,292.17 464.05,304.53 464.8,308" fill="none" stroke="#ee1d1d" stroke-width="1.5"/></g>
<text x="330.8" y="196.8" font-size="3.9" fill="#ffffff" font-family="Liberation Sans" font-weight="bold" text-anchor="middle" textLength="14.0" lengthAdjust="spacingAndGlyphs">I  1.4ms</text>
<text x="341.5" y="209.5" font-size="3.9" fill="#ffffff" font-family="Liberation Sans" font-weight="bold" text-anchor="middle" textLength="14.0" lengthAdjust="spacingAndGlyphs">226.03nV</text>
<text x="365" y="192.8" font-size="3.9" fill="#ffffff" font-family="Liberation Sans" font-weight="bold" text-anchor="middle" textLength="17.5" lengthAdjust="spacingAndGlyphs">III  3.6ms</text>
<text x="373" y="213.8" font-size="3.9" fill="#ffffff" font-family="Liberation Sans" font-weight="bold" text-anchor="middle" textLength="14.0" lengthAdjust="spacingAndGlyphs">246.36nV</text>
<text x="394" y="195.3" font-size="3.9" fill="#ffffff" font-family="Liberation Sans" font-weight="bold" text-anchor="middle" textLength="14.0" lengthAdjust="spacingAndGlyphs">V  5.5ms</text>
<text x="409" y="221.3" font-size="3.9" fill="#ffffff" font-family="Liberation Sans" font-weight="bold" text-anchor="middle" textLength="14.0" lengthAdjust="spacingAndGlyphs">406.47nV</text>
<ellipse cx="330.8" cy="199.2" rx="0.6" ry="0.6" fill="#ffffff"/>
<ellipse cx="341" cy="205.79999999999998" rx="0.6" ry="0.6" fill="#ffffff"/>
<ellipse cx="365.2" cy="195.29999999999998" rx="0.6" ry="0.6" fill="#ffffff"/>
<ellipse cx="372.9" cy="210.2" rx="0.6" ry="0.6" fill="#ffffff"/>
<ellipse cx="394.4" cy="198.0" rx="0.6" ry="0.6" fill="#ffffff"/>
<ellipse cx="408.9" cy="217.79999999999998" rx="0.6" ry="0.6" fill="#ffffff"/>
<ellipse cx="462" cy="210.5" rx="2.0" ry="2.4" fill="#1a1ae0"/>
<text x="449.5" y="211.5" font-size="3.7" fill="#1a1ae0" font-family="Liberation Sans" font-weight="bold" text-anchor="middle" textLength="18" lengthAdjust="spacingAndGlyphs">11:43:45.466</text>
<text x="458.5" y="218" font-size="3.7" fill="#1a1ae0" font-family="Liberation Sans" font-weight="bold" text-anchor="middle" textLength="8" lengthAdjust="spacingAndGlyphs">A1-C2</text>
<text x="330.8" y="317.8" font-size="3.9" fill="#ffffff" font-family="Liberation Sans" font-weight="bold" text-anchor="middle" textLength="14.0" lengthAdjust="spacingAndGlyphs">I  1.4ms</text>
<text x="341.5" y="330.5" font-size="3.9" fill="#ffffff" font-family="Liberation Sans" font-weight="bold" text-anchor="middle" textLength="14.0" lengthAdjust="spacingAndGlyphs">166.42nV</text>
<text x="365" y="313.8" font-size="3.9" fill="#ffffff" font-family="Liberation Sans" font-weight="bold" text-anchor="middle" textLength="17.5" lengthAdjust="spacingAndGlyphs">III  3.7ms</text>
<text x="394" y="316.3" font-size="3.9" fill="#ffffff" font-family="Liberation Sans" font-weight="bold" text-anchor="middle" textLength="14.0" lengthAdjust="spacingAndGlyphs">V  5.5ms</text>
<text x="409" y="342.3" font-size="3.9" fill="#ffffff" font-family="Liberation Sans" font-weight="bold" text-anchor="middle" textLength="14.0" lengthAdjust="spacingAndGlyphs">482.97nV</text>
<ellipse cx="330.8" cy="320.2" rx="0.6" ry="0.6" fill="#ffffff"/>
<ellipse cx="341" cy="326.8" rx="0.6" ry="0.6" fill="#ffffff"/>
<ellipse cx="365.2" cy="316.3" rx="0.6" ry="0.6" fill="#ffffff"/>
<ellipse cx="372.9" cy="331.2" rx="0.6" ry="0.6" fill="#ffffff"/>
<ellipse cx="394.4" cy="319.0" rx="0.6" ry="0.6" fill="#ffffff"/>
<ellipse cx="408.9" cy="338.8" rx="0.6" ry="0.6" fill="#ffffff"/>
<ellipse cx="462" cy="331.5" rx="2.0" ry="2.4" fill="#ee1d1d"/>
<text x="449.5" y="332.5" font-size="3.7" fill="#ee1d1d" font-family="Liberation Sans" font-weight="bold" text-anchor="middle" textLength="18" lengthAdjust="spacingAndGlyphs">11:45:45.466</text>
<text x="458.5" y="339" font-size="3.7" fill="#ee1d1d" font-family="Liberation Sans" font-weight="bold" text-anchor="middle" textLength="8" lengthAdjust="spacingAndGlyphs">A2-C2</text>
<polyline points="89,338 91.1,337.5 93,336.2 94.6,335.08 96.2,333 97.8,335.67 99.4,337.1 101.3,334.71 103.2,332.4 105.7,334 107.65,333.13 109.6,331.8 111.5,333.7 114,332.1 115.9,333.23 117.8,335.6 119.1,335.23 120.4,334.3 122.0,335.01 123.6,335.3 125.2,335.34 126.8,334 128.4,334.9 130,334.9 131.9,335.6 134.4,330.2 136.3,330.7 138.2,331.8 140.1,336.09 142,340.7 143.47,342.64 144.93,343.43 146.4,345.8 148.3,343.5 150.2,341.3 152.1,338.29 154,336.2 155.6,334.06 157.2,333 159.1,331.1 161,332.4 162.9,329.2 165.5,330.2 167.1,329.73 168.7,330.5 170.25,331.18 171.8,331.1 173.4,331.53 175,333 176.6,333.45 178.2,334.6 179.8,334.45 181.4,334.6 183.0,335.72 184.6,335.8 187.1,335.3 188.7,334.06 190.3,334 191.65,333.43 193.0,333.07 194.35,333.04 195.7,332" stroke="#1f3370" stroke-width="2.45" fill="none" stroke-linejoin="round" stroke-linecap="round" opacity="0.55"/>
<polyline points="89,338 91.1,337.5 93,336.2 94.6,335.08 96.2,333 97.8,335.67 99.4,337.1 101.3,334.71 103.2,332.4 105.7,334 107.65,333.13 109.6,331.8 111.5,333.7 114,332.1 115.9,333.23 117.8,335.6 119.1,335.23 120.4,334.3 122.0,335.01 123.6,335.3 125.2,335.34 126.8,334 128.4,334.9 130,334.9 131.9,335.6 134.4,330.2 136.3,330.7 138.2,331.8 140.1,336.09 142,340.7 143.47,342.64 144.93,343.43 146.4,345.8 148.3,343.5 150.2,341.3 152.1,338.29 154,336.2 155.6,334.06 157.2,333 159.1,331.1 161,332.4 162.9,329.2 165.5,330.2 167.1,329.73 168.7,330.5 170.25,331.18 171.8,331.1 173.4,331.53 175,333 176.6,333.45 178.2,334.6 179.8,334.45 181.4,334.6 183.0,335.72 184.6,335.8 187.1,335.3 188.7,334.06 190.3,334 191.65,333.43 193.0,333.07 194.35,333.04 195.7,332" stroke="#f4ee12" stroke-width="1.45" fill="none" stroke-linejoin="round" stroke-linecap="round"/>
<ellipse cx="195.7" cy="332" rx="2.1" ry="2.5" fill="#f4ee12"/>
<text x="165" y="327.3" font-size="3.9" fill="#ffffff" font-family="Liberation Sans" font-weight="bold" text-anchor="middle" textLength="10" lengthAdjust="spacingAndGlyphs">1.53µV</text>
<text x="148.5" y="350.3" font-size="3.9" fill="#ffffff" font-family="Liberation Sans" font-weight="bold" text-anchor="middle" textLength="16" lengthAdjust="spacingAndGlyphs">P40  42.2ms</text>
<text x="184" y="332.3" font-size="3.7" fill="#f4ee12" font-family="Liberation Sans" font-weight="bold" text-anchor="middle" textLength="16" lengthAdjust="spacingAndGlyphs">11:25:51.668</text>
<text x="194" y="338.5" font-size="3.7" fill="#f4ee12" font-family="Liberation Sans" font-weight="bold" text-anchor="middle" textLength="8" lengthAdjust="spacingAndGlyphs">C3'-FZ</text>
<text font-size="3.6" fill="#a8b6bb" font-family="Liberation Sans" transform="translate(91.0,346) rotate(-90)" textLength="24" lengthAdjust="spacingAndGlyphs">1 µV / Div</text>
<polyline points="201.94439461883408,338 203.92762331838566,337.5 205.7219730941704,336.2 207.23,335.05 208.74403587443948,333 210.26,335.56 211.76609865470851,337.1 213.56,334.44 215.35479820627802,332.4 217.71578475336324,334 219.56,332.78 221.39892376681615,331.8 223.1932735426009,333.7 225.5542600896861,332.1 227.35,333.65 229.1429596412556,335.6 231.59838565022423,334.3 233.11,335.34 234.62044843049327,335.3 236.13,335.29 237.64251121076234,334 239.15,333.96 240.66457399103138,334.9 242.45892376681616,335.6 244.81991031390135,330.2 246.61,330.55 248.40860986547085,331.8 250.2,335.87 251.99730941704036,340.7 253.38,342.03 254.77,344.08 256.1526457399103,345.8 257.95,343.67 259.74134529147983,341.3 261.54,338.42 263.33004484304934,336.2 264.84,333.91 266.3521076233184,333 268.14645739910316,331.1 269.9408071748879,332.4 271.73515695067266,329.2 274.19058295964123,330.2 275.7,330.24 277.2126457399103,330.5 278.68,330.62 280.140269058296,331.1 281.65,332.14 283.162331838565,333 284.67,334.43 286.18439461883406,334.6 287.7,334.87 289.20645739910316,334.6 290.72,335.22 292.2285201793722,335.8 294.5895067264574,335.3 296.1,334.81 297.6115695067265,334 299.31,333.58 301.01,332.04 302.7113004484305,332" stroke="#ee1d1d" stroke-width="1.45" fill="none" stroke-linejoin="round" stroke-linecap="round"/>
<ellipse cx="302.5" cy="332" rx="2.1" ry="2.5" fill="#ee1d1d"/>
<text x="276" y="327.3" font-size="3.9" fill="#ffffff" font-family="Liberation Sans" font-weight="bold" text-anchor="middle" textLength="10" lengthAdjust="spacingAndGlyphs">1.56µV</text>
<text x="261" y="350.3" font-size="3.9" fill="#ffffff" font-family="Liberation Sans" font-weight="bold" text-anchor="middle" textLength="16" lengthAdjust="spacingAndGlyphs">P40  42.2ms</text>
<text x="290.5" y="332.3" font-size="3.7" fill="#ee1d1d" font-family="Liberation Sans" font-weight="bold" text-anchor="middle" textLength="16" lengthAdjust="spacingAndGlyphs">11:25:51.668</text>
<text x="300.5" y="338.5" font-size="3.7" fill="#ee1d1d" font-family="Liberation Sans" font-weight="bold" text-anchor="middle" textLength="8" lengthAdjust="spacingAndGlyphs">C3'-FZ</text>
<text font-size="3.6" fill="#a8b6bb" font-family="Liberation Sans" transform="translate(204.0,346) rotate(-90)" textLength="24" lengthAdjust="spacingAndGlyphs">1 µV / Div</text>
<rect x="466.3" y="149.6" width="155.8" height="87.4" fill="#5f7c89"/>
<rect x="466.3" y="149.6" width="155.8" height="8.6" fill="#5a7683"/>
<ellipse cx="469.3" cy="153.6" rx="1.8" ry="2.5" fill="#ffffff"/>
<rect x="472" y="151.3" width="15" height="5.8" fill="#f4f1ea" rx="1"/>
<text x="479.5" y="155.8" font-size="4.4" fill="#333333" font-family="Liberation Sans" font-weight="bold" text-anchor="middle" textLength="11" lengthAdjust="spacingAndGlyphs">VIDEO</text>
<rect x="602.6" y="151.5" width="4.2" height="4.6" fill="#ffffff" rx="0.6"/>
<rect x="609" y="153.4" width="3.5" height="0.9" fill="#ffffff"/>
<rect x="614.8" y="151.7" width="4" height="4.2" fill="none" rx="0.5" stroke="#ffffff" stroke-width="0.7"/>
<text x="467.5" y="226.2" font-size="4.2" fill="#e8eef2" font-family="Liberation Sans" textLength="7" lengthAdjust="spacingAndGlyphs">VID</text>
<defs><filter id="bl" x="-5%" y="-5%" width="110%" height="110%"><feGaussianBlur stdDeviation="1.5"/></filter><filter id="bl2"><feGaussianBlur stdDeviation="0.6"/></filter><clipPath id="vc"><rect x="492.5" y="157.4" width="103.6" height="70.4"/></clipPath><linearGradient id="vg" x1="0" y1="0" x2="0.3" y2="1"><stop offset="0" stop-color="#d97563"/><stop offset="0.55" stop-color="#c9594c"/><stop offset="1" stop-color="#a8403a"/></linearGradient></defs>
<g clip-path="url(#vc)">
<rect x="492.5" y="157.4" width="103.6" height="70.4" fill="#b94a3f"/>
<g filter="url(#bl)">
<path d="M492,157 L548,157 L545,168 L520,185 L505,195 L492,200 Z" fill="#cd6352" />
<path d="M498,163 L528,159 L532,171 L506,181 Z" fill="#d66e5e" />
<path d="M548,157 L596,157 L596,182 L582,168 L562,163 L545,168 Z" fill="#bd4c40" />
<path d="M582,157 L596,157 L596,178 Z" fill="#a83a32" />
<path d="M522,157 L534,170 L540,178" fill="none" stroke="#7a3432" stroke-width="0.6" />
<path d="M492,183 L506,190" fill="none" stroke="#8a3a36" stroke-width="0.5" />
<path d="M500,198 L512,188 L526,178 L542,170 L556,166 L570,164 L584,168 L594,178 L596,194 L588,196 L578,186 L566,174 L552,178 L540,188 L532,196 L522,204 L510,206 Z" fill="#cf9e96" />
<path d="M514,192 L530,180 L544,172 L552,172 L540,182 L528,194 Z" fill="#dcb8b0" />
<path d="M572,170 L586,172 L594,184 L590,192 L580,182 Z" fill="#d4aaa2" />
<ellipse cx="520" cy="186" rx="1.6" ry="1.6" fill="#c85a50"/>
<ellipse cx="530" cy="178" rx="1.4" ry="1.4" fill="#c85a50"/>
<ellipse cx="538" cy="176" rx="1.2" ry="1.2" fill="#c85a50"/>
<ellipse cx="512" cy="196" rx="1.5" ry="1.5" fill="#c85a50"/>
<ellipse cx="578" cy="172" rx="1.3" ry="1.3" fill="#c85a50"/>
<ellipse cx="590" cy="180" rx="1.2" ry="1.2" fill="#c85a50"/>
<ellipse cx="548" cy="168" rx="1.0" ry="1.0" fill="#c85a50"/>
<ellipse cx="526" cy="190" rx="1.1" ry="1.1" fill="#c85a50"/>
<path d="M500,198 L520,198 L528,205 L518,210 L505,205 Z" fill="#c48a82" />
<path d="M516,200 Q526,194 532,202 Q538,212 542,223 L534,224 Q528,212 520,206 Z" fill="#c4b4b0" />
<path d="M504,204 L520,210 L531,221 L520,223 L502,213 Z" fill="#9c2c29" />
<path d="M544,186 L556,176 L564.5,171.3 L572,179 L584,193 L580,204 L566,208 L555,211 L541,210 L535,202 L538,192 Z" fill="#381f25" />
<path d="M552,190 L566,186 L573,196 L562,204 L550,201 Z" fill="#585a68" />
<path d="M538,193 L548,189 L554,199 L546,205 L537,201 Z" fill="#a82424" />
<path d="M551,199 L556,198 L557,204 L552,205 Z" fill="#dcb09e" />
<path d="M543,204 L548,203 L549,209 L543,209 Z" fill="#d8d2d4" />
<path d="M566,195 L582,190 L596,186 L596,218 L584,216 L572,211 Z" fill="#5a4648" />
<path d="M530,214 L548,211 L566,211 L585,217 L596,218 L596,228 L520,228 Z" fill="#a0372f" />
<path d="M546,213 Q560,211 574,215 Q570,221 556,221 Q548,219 546,213 Z" fill="#c99c94" />
<path d="M492,210 L515,214 L531,223 L531,228 L492,228 Z" fill="#98302a" />
</g></g>
<rect x="466.3" y="229.5" width="155.8" height="8" fill="#5a7683"/>
<text x="469" y="235.4" font-size="4.6" fill="#ffffff" font-family="Liberation Sans" font-weight="bold" text-anchor="middle">1</text>
<rect x="471.9" y="230.8" width="11.2" height="4.9" fill="#e8321e" rx="1"/>
<text x="477.5" y="234.8" font-size="4.4" fill="#ffffff" font-family="Liberation Sans" font-weight="bold" text-anchor="middle" textLength="8.5" lengthAdjust="spacingAndGlyphs">MEP</text>
<text x="485" y="235.2" font-size="4.8" fill="#ffffff" font-family="Liberation Sans" font-weight="bold" textLength="17" lengthAdjust="spacingAndGlyphs">TES MEP</text>
<rect x="596.2" y="230.8" width="4.4" height="4.8" fill="#ffffff" rx="0.6"/>
<rect x="602.6" y="230.8" width="4.4" height="4.8" fill="#ffffff" rx="0.6"/>
<rect x="609" y="232.8" width="3.6" height="0.9" fill="#ffffff"/>
<rect x="614.7" y="231" width="4.3" height="4.4" fill="none" rx="0.5" stroke="#ffffff" stroke-width="0.7"/>
<rect x="467.2" y="237.5" width="153.8" height="152.89999999999998" fill="#3c4f57"/>
<rect x="465.8" y="237.5" width="1.4" height="152.89999999999998" fill="#8fb0bd"/>
<line x1="529" y1="237.5" x2="529" y2="390.4" stroke="#67787f" stroke-width="0.75"/>
<line x1="559.6" y1="237.5" x2="559.6" y2="390.4" stroke="#67787f" stroke-width="0.75"/>
<line x1="590.4" y1="237.5" x2="590.4" y2="390.4" stroke="#67787f" stroke-width="0.75"/>
<line x1="489.5" y1="237.5" x2="489.5" y2="390.4" stroke="#a8b6bc" stroke-width="0.8"/>
<line x1="467.2" y1="267.8" x2="621" y2="267.8" stroke="#5f7178" stroke-width="0.7"/>
<line x1="467.2" y1="298.5" x2="621" y2="298.5" stroke="#5f7178" stroke-width="0.7"/>
<line x1="467.2" y1="329.2" x2="621" y2="329.2" stroke="#5f7178" stroke-width="0.7"/>
<line x1="467.2" y1="359.8" x2="621" y2="359.8" stroke="#5f7178" stroke-width="0.7"/>
<path d="M487.8,238 h3.4 l-1.7,3.8 z" fill="#ffffff" />
<rect x="467.2" y="245.20000000000002" width="153.8" height="3.4" fill="#22376c" opacity="0.8"/>
<polyline points="467.2,246.9 489.5,246.9 491.4,243.9 493.0,247.1 495.2,246.9 497.8,244.3 499.7,245.20000000000002 501.6,252.20000000000002 502.9,245.20000000000002 506.0,243.9 508.0,248.4 511.1,246.5 514.3,245.8 516.9,248.4 518.8,246.9 621,246.9" stroke="#f4ee12" stroke-width="1.3" fill="none" stroke-linejoin="round" />
<text x="503" y="242.5" font-size="3.8" fill="#ffffff" font-family="Liberation Sans" font-weight="bold" text-anchor="middle" textLength="23" lengthAdjust="spacingAndGlyphs">MAP20  13.5ms</text>
<text x="509" y="254.1" font-size="3.8" fill="#ffffff" font-family="Liberation Sans" font-weight="bold" text-anchor="middle" textLength="13" lengthAdjust="spacingAndGlyphs">216.82µV</text>
<ellipse cx="501.6" cy="252.20000000000002" rx="0.5" ry="0.5" fill="#ffffff"/>
<rect x="595.35" y="246.0" width="25.65" height="4.8" fill="#3c4f57"/>
<text x="620.5" y="250.1" font-size="3.9" fill="#f4ee12" font-family="Liberation Sans" font-weight="bold" text-anchor="end" textLength="24.65" lengthAdjust="spacingAndGlyphs">Brachioradialis L</text>
<text x="614" y="243.9" font-size="3.9" fill="#f4ee12" font-family="Liberation Sans" font-weight="bold" text-anchor="end" textLength="18" lengthAdjust="spacingAndGlyphs">12:35:07 PM</text>
<ellipse cx="617.5" cy="243.1" rx="2.0" ry="2.4" fill="#f4ee12"/>
<rect x="467.2" y="264.35" width="153.8" height="3.4" fill="#22376c" opacity="0.8"/>
<polyline points="467.2,266.05 489.5,266.05 491.4,263.05 493.0,266.25 495.2,266.05 497.8,263.45 499.7,264.35 501.6,271.35 502.9,264.35 506.0,263.05 508.0,267.55 511.1,265.65000000000003 514.3,264.95 516.9,267.55 518.8,266.05 621,266.05" stroke="#f4ee12" stroke-width="1.3" fill="none" stroke-linejoin="round" />
<text x="503" y="261.65000000000003" font-size="3.8" fill="#ffffff" font-family="Liberation Sans" font-weight="bold" text-anchor="middle" textLength="23" lengthAdjust="spacingAndGlyphs">MAP20  13.5ms</text>
<text x="509" y="273.25" font-size="3.8" fill="#ffffff" font-family="Liberation Sans" font-weight="bold" text-anchor="middle" textLength="13" lengthAdjust="spacingAndGlyphs">216.82µV</text>
<ellipse cx="501.6" cy="271.35" rx="0.5" ry="0.5" fill="#ffffff"/>
<rect x="585.2" y="265.15000000000003" width="35.8" height="4.8" fill="#3c4f57"/>
<text x="620.5" y="269.25" font-size="3.9" fill="#f4ee12" font-family="Liberation Sans" font-weight="bold" text-anchor="end" textLength="34.8" lengthAdjust="spacingAndGlyphs">Abductor digiti minimi L</text>
<text x="614" y="263.05" font-size="3.9" fill="#f4ee12" font-family="Liberation Sans" font-weight="bold" text-anchor="end" textLength="18" lengthAdjust="spacingAndGlyphs">12:35:07 PM</text>
<ellipse cx="617.5" cy="262.25" rx="2.0" ry="2.4" fill="#f4ee12"/>
<rect x="467.2" y="283.5" width="153.8" height="3.4" fill="#22376c" opacity="0.8"/>
<polyline points="467.2,285.2 489.5,285.2 491.4,282.2 493.0,285.4 495.2,285.2 497.8,282.59999999999997 499.7,283.5 501.6,290.5 502.9,283.5 506.0,282.2 508.0,286.7 511.1,284.8 514.3,284.09999999999997 516.9,286.7 518.8,285.2 621,285.2" stroke="#f4ee12" stroke-width="1.3" fill="none" stroke-linejoin="round" />
<text x="503" y="280.8" font-size="3.8" fill="#ffffff" font-family="Liberation Sans" font-weight="bold" text-anchor="middle" textLength="23" lengthAdjust="spacingAndGlyphs">MAP40  13.5ms</text>
<text x="509" y="292.4" font-size="3.8" fill="#ffffff" font-family="Liberation Sans" font-weight="bold" text-anchor="middle" textLength="13" lengthAdjust="spacingAndGlyphs">216.82µV</text>
<ellipse cx="501.6" cy="290.5" rx="0.5" ry="0.5" fill="#ffffff"/>
<rect x="592.45" y="284.3" width="28.55" height="4.8" fill="#3c4f57"/>
<text x="620.5" y="288.4" font-size="3.9" fill="#f4ee12" font-family="Liberation Sans" font-weight="bold" text-anchor="end" textLength="27.55" lengthAdjust="spacingAndGlyphs">Tibialis anterior L</text>
<text x="614" y="282.2" font-size="3.9" fill="#f4ee12" font-family="Liberation Sans" font-weight="bold" text-anchor="end" textLength="18" lengthAdjust="spacingAndGlyphs">12:35:07 PM</text>
<ellipse cx="617.5" cy="281.4" rx="2.0" ry="2.4" fill="#f4ee12"/>
<rect x="467.2" y="302.65000000000003" width="153.8" height="3.4" fill="#22376c" opacity="0.8"/>
<polyline points="467.2,304.35 489.5,304.35 491.4,301.35 493.0,304.55 495.2,304.35 497.8,301.75 499.7,302.65000000000003 501.6,309.65000000000003 502.9,302.65000000000003 506.0,301.35 508.0,305.85 511.1,303.95000000000005 514.3,303.25 516.9,305.85 518.8,304.35 621,304.35" stroke="#f4ee12" stroke-width="1.3" fill="none" stroke-linejoin="round" />
<text x="503" y="299.95000000000005" font-size="3.8" fill="#ffffff" font-family="Liberation Sans" font-weight="bold" text-anchor="middle" textLength="23" lengthAdjust="spacingAndGlyphs">MAP40  13.5ms</text>
<text x="509" y="311.55" font-size="3.8" fill="#ffffff" font-family="Liberation Sans" font-weight="bold" text-anchor="middle" textLength="13" lengthAdjust="spacingAndGlyphs">216.82µV</text>
<ellipse cx="501.6" cy="309.65000000000003" rx="0.5" ry="0.5" fill="#ffffff"/>
<rect x="592.45" y="303.45000000000005" width="28.55" height="4.8" fill="#3c4f57"/>
<text x="620.5" y="307.55" font-size="3.9" fill="#f4ee12" font-family="Liberation Sans" font-weight="bold" text-anchor="end" textLength="27.55" lengthAdjust="spacingAndGlyphs">Abductor hallucis L</text>
<text x="614" y="301.35" font-size="3.9" fill="#f4ee12" font-family="Liberation Sans" font-weight="bold" text-anchor="end" textLength="18" lengthAdjust="spacingAndGlyphs">12:35:07 PM</text>
<ellipse cx="617.5" cy="300.55" rx="2.0" ry="2.4" fill="#f4ee12"/>
<polyline points="467.2,323.5 489.5,323.5 491.4,320.5 493.0,323.7 495.2,323.5 497.8,320.9 499.7,321.8 501.6,328.8 502.9,321.8 506.0,320.5 508.0,325.0 511.1,323.1 514.3,322.4 516.9,325.0 518.8,323.5 621,323.5" stroke="#ee1d1d" stroke-width="1.3" fill="none" stroke-linejoin="round" />
<text x="503" y="319.1" font-size="3.8" fill="#ffffff" font-family="Liberation Sans" font-weight="bold" text-anchor="middle" textLength="23" lengthAdjust="spacingAndGlyphs">MAP20  13.5ms</text>
<text x="509" y="330.7" font-size="3.8" fill="#ffffff" font-family="Liberation Sans" font-weight="bold" text-anchor="middle" textLength="13" lengthAdjust="spacingAndGlyphs">216.82µV</text>
<ellipse cx="501.6" cy="328.8" rx="0.5" ry="0.5" fill="#ffffff"/>
<rect x="595.35" y="322.6" width="25.65" height="4.8" fill="#3c4f57"/>
<text x="620.5" y="326.7" font-size="3.9" fill="#ee1d1d" font-family="Liberation Sans" font-weight="bold" text-anchor="end" textLength="24.65" lengthAdjust="spacingAndGlyphs">Brachioradialis R</text>
<text x="614" y="320.5" font-size="3.9" fill="#ee1d1d" font-family="Liberation Sans" font-weight="bold" text-anchor="end" textLength="18" lengthAdjust="spacingAndGlyphs">12:35:07 PM</text>
<ellipse cx="617.5" cy="319.7" rx="2.0" ry="2.4" fill="#ee1d1d"/>
<polyline points="467.2,342.65 489.5,342.65 491.4,339.65 493.0,342.84999999999997 495.2,342.65 497.8,340.04999999999995 499.7,340.95 501.6,347.95 502.9,340.95 506.0,339.65 508.0,344.15 511.1,342.25 514.3,341.54999999999995 516.9,344.15 518.8,342.65 621,342.65" stroke="#ee1d1d" stroke-width="1.3" fill="none" stroke-linejoin="round" />
<text x="503" y="338.25" font-size="3.8" fill="#ffffff" font-family="Liberation Sans" font-weight="bold" text-anchor="middle" textLength="23" lengthAdjust="spacingAndGlyphs">MAP20  13.5ms</text>
<text x="509" y="349.84999999999997" font-size="3.8" fill="#ffffff" font-family="Liberation Sans" font-weight="bold" text-anchor="middle" textLength="13" lengthAdjust="spacingAndGlyphs">216.82µV</text>
<ellipse cx="501.6" cy="347.95" rx="0.5" ry="0.5" fill="#ffffff"/>
<rect x="585.2" y="341.75" width="35.8" height="4.8" fill="#3c4f57"/>
<text x="620.5" y="345.84999999999997" font-size="3.9" fill="#ee1d1d" font-family="Liberation Sans" font-weight="bold" text-anchor="end" textLength="34.8" lengthAdjust="spacingAndGlyphs">Abductor digiti minimi R</text>
<text x="614" y="339.65" font-size="3.9" fill="#ee1d1d" font-family="Liberation Sans" font-weight="bold" text-anchor="end" textLength="18" lengthAdjust="spacingAndGlyphs">12:35:07 PM</text>
<ellipse cx="617.5" cy="338.84999999999997" rx="2.0" ry="2.4" fill="#ee1d1d"/>
<polyline points="467.2,361.8 489.5,361.8 491.4,358.8 493.0,362.0 495.2,361.8 497.8,359.2 499.7,360.1 501.6,367.1 502.9,360.1 506.0,358.8 508.0,363.3 511.1,361.40000000000003 514.3,360.7 516.9,363.3 518.8,361.8 621,361.8" stroke="#ee1d1d" stroke-width="1.3" fill="none" stroke-linejoin="round" />
<text x="503" y="357.40000000000003" font-size="3.8" fill="#ffffff" font-family="Liberation Sans" font-weight="bold" text-anchor="middle" textLength="23" lengthAdjust="spacingAndGlyphs">MAP40  13.5ms</text>
<text x="509" y="369.0" font-size="3.8" fill="#ffffff" font-family="Liberation Sans" font-weight="bold" text-anchor="middle" textLength="13" lengthAdjust="spacingAndGlyphs">216.82µV</text>
<ellipse cx="501.6" cy="367.1" rx="0.5" ry="0.5" fill="#ffffff"/>
<rect x="592.45" y="360.90000000000003" width="28.55" height="4.8" fill="#3c4f57"/>
<text x="620.5" y="365.0" font-size="3.9" fill="#ee1d1d" font-family="Liberation Sans" font-weight="bold" text-anchor="end" textLength="27.55" lengthAdjust="spacingAndGlyphs">Tibialis anterior R</text>
<text x="614" y="358.8" font-size="3.9" fill="#ee1d1d" font-family="Liberation Sans" font-weight="bold" text-anchor="end" textLength="18" lengthAdjust="spacingAndGlyphs">12:35:07 PM</text>
<ellipse cx="617.5" cy="358.0" rx="2.0" ry="2.4" fill="#ee1d1d"/>
<polyline points="467.2,380.95 489.5,380.95 491.4,377.95 493.0,381.15 495.2,380.95 497.8,378.34999999999997 499.7,379.25 501.6,386.25 502.9,379.25 506.0,377.95 508.0,382.45 511.1,380.55 514.3,379.84999999999997 516.9,382.45 518.8,380.95 621,380.95" stroke="#ee1d1d" stroke-width="1.3" fill="none" stroke-linejoin="round" />
<text x="503" y="376.55" font-size="3.8" fill="#ffffff" font-family="Liberation Sans" font-weight="bold" text-anchor="middle" textLength="23" lengthAdjust="spacingAndGlyphs">MAP40  13.5ms</text>
<text x="509" y="388.15" font-size="3.8" fill="#ffffff" font-family="Liberation Sans" font-weight="bold" text-anchor="middle" textLength="13" lengthAdjust="spacingAndGlyphs">216.82µV</text>
<ellipse cx="501.6" cy="386.25" rx="0.5" ry="0.5" fill="#ffffff"/>
<rect x="592.45" y="380.05" width="28.55" height="4.8" fill="#3c4f57"/>
<text x="620.5" y="384.15" font-size="3.9" fill="#ee1d1d" font-family="Liberation Sans" font-weight="bold" text-anchor="end" textLength="27.55" lengthAdjust="spacingAndGlyphs">Abductor hallucis R</text>
<text x="614" y="377.95" font-size="3.9" fill="#ee1d1d" font-family="Liberation Sans" font-weight="bold" text-anchor="end" textLength="18" lengthAdjust="spacingAndGlyphs">12:35:07 PM</text>
<ellipse cx="617.5" cy="377.15" rx="2.0" ry="2.4" fill="#ee1d1d"/>
<rect x="566" y="242" width="18" height="19" fill="#3c4f57"/>
<text x="567.5" y="245.5" font-size="3.8" fill="#ffffff" font-family="Liberation Sans" font-weight="bold" textLength="15.5" lengthAdjust="spacingAndGlyphs">1: 198.3 µV</text>
<text x="567.5" y="250.1" font-size="3.8" fill="#ffffff" font-family="Liberation Sans" font-weight="bold" textLength="15.5" lengthAdjust="spacingAndGlyphs">2: 198.3 µV</text>
<text x="567.5" y="254.7" font-size="3.8" fill="#ffffff" font-family="Liberation Sans" font-weight="bold" textLength="8" lengthAdjust="spacingAndGlyphs">dt: 0 s</text>
<text x="567.5" y="259.3" font-size="3.8" fill="#ffffff" font-family="Liberation Sans" font-weight="bold" textLength="8" lengthAdjust="spacingAndGlyphs">NaN V</text>
<text font-size="3.2" fill="#94a4aa" font-family="Liberation Sans" transform="translate(469,327) rotate(-90)" textLength="20" lengthAdjust="spacingAndGlyphs">1 mV / Div</text>
<rect x="467.4" y="383.6" width="8.2" height="6.3" fill="#6b808a"/>
<text x="471.5" y="388.2" font-size="4.2" fill="#e8eef2" font-family="Liberation Sans" font-weight="bold" text-anchor="middle" textLength="7.2" lengthAdjust="spacingAndGlyphs">AVG</text>
<text x="497.5" y="389.2" font-size="3.5" fill="#8a9aa0" font-family="Liberation Sans" text-anchor="middle">10</text>
<text x="529" y="389.2" font-size="3.5" fill="#8a9aa0" font-family="Liberation Sans" text-anchor="middle">50</text>
<text x="559.8" y="389.2" font-size="3.5" fill="#8a9aa0" font-family="Liberation Sans" text-anchor="middle">60</text>
<text x="590.3" y="389.2" font-size="3.5" fill="#8a9aa0" font-family="Liberation Sans" text-anchor="middle">80</text>
<text x="616" y="389.2" font-size="3.5" fill="#8a9aa0" font-family="Liberation Sans" text-anchor="middle">100</text>
<rect x="622" y="44.8" width="10" height="80.8" fill="#34474f"/>
<rect x="622" y="55.5" width="10" height="10.8" fill="#475c66"/>
<path d="M624.6,48.6 a2.2,2.6 0 1 1 1,4.6" fill="none" stroke="#ffffff" stroke-width="0.9" />
<path d="M623.6,48.2 l1.6,-1.6 l0.4,2.4 z" fill="#ffffff" />
<path d="M628.4,58.6 a2.2,2.6 0 1 0 -1,4.6" fill="none" stroke="#6d8089" stroke-width="0.8" />
<rect x="622.2" y="66.4" width="9.6" height="22.3" fill="#ffffff"/>
<text font-size="4.4" fill="#333" font-family="Liberation Sans" transform="translate(625.6,68.5) rotate(90)" textLength="18" lengthAdjust="spacingAndGlyphs">Overview</text>
<text font-size="4.4" fill="#ffffff" font-family="Liberation Sans" transform="translate(625.6,91.8) rotate(90)" textLength="20" lengthAdjust="spacingAndGlyphs">Display 2</text>
<rect x="622" y="114.7" width="10" height="11" fill="#2e3f47"/>
<ellipse cx="626.8" cy="120.4" rx="2.6" ry="3.0" fill="#ffffff"/>
<ellipse cx="626.8" cy="120.4" rx="1.1" ry="1.3" fill="#2e3f47"/>
<text x="89.6" y="398.6" font-size="4.6" fill="#ffffff" font-family="Liberation Sans" font-weight="bold" text-anchor="middle">7</text>
<rect x="93" y="394" width="10.9" height="4.9" fill="#e8321e" rx="0.8"/>
<text x="98.4" y="398" font-size="4.4" fill="#ffffff" font-family="Liberation Sans" font-weight="bold" text-anchor="middle" textLength="8.5" lengthAdjust="spacingAndGlyphs">MEP</text>
<text x="106" y="398.4" font-size="4.8" fill="#ffffff" font-family="Liberation Sans" font-weight="bold" textLength="16.8" lengthAdjust="spacingAndGlyphs">TES MEP</text>
<ellipse cx="138.8" cy="396.5" rx="1.9" ry="2.2" fill="#ffffff"/>
<text x="144.5" y="398.4" font-size="4.6" fill="#ffffff" font-family="Liberation Sans" font-weight="bold" text-anchor="middle">1</text>
<rect x="147.2" y="393.8" width="10.8" height="5.3" fill="#1b8aa3" rx="0.8"/>
<text x="152.6" y="398.2" font-size="4.6" fill="#eaf8fa" font-family="Liberation Sans" font-weight="bold" text-anchor="middle" textLength="8" lengthAdjust="spacingAndGlyphs">EEG</text>
<rect x="86.4" y="400.6" width="535.8" height="23.3" fill="#62808d"/>
<line x1="86.4" y1="400.9" x2="622" y2="400.9" stroke="#7e9aa6" stroke-width="0.6"/>
<line x1="86.7" y1="400.6" x2="86.7" y2="424" stroke="#7e9aa6" stroke-width="0.6"/>
<rect x="119.5" y="403.45000000000005" width="481" height="1.3" fill="#3f545e"/>
<rect x="119.5" y="407.85" width="481" height="1.3" fill="#3f545e"/>
<rect x="119.5" y="412.25" width="481" height="1.3" fill="#3f545e"/>
<text x="116.5" y="405.6" font-size="3.8" fill="#e0e8ec" font-family="Liberation Sans" text-anchor="end" textLength="10.5" lengthAdjust="spacingAndGlyphs">Events</text>
<text x="116.5" y="410" font-size="3.8" fill="#e0e8ec" font-family="Liberation Sans" text-anchor="end" textLength="7" lengthAdjust="spacingAndGlyphs">Data</text>
<text x="116.5" y="414.4" font-size="3.8" fill="#e0e8ec" font-family="Liberation Sans" text-anchor="end" textLength="6" lengthAdjust="spacingAndGlyphs">SEP</text>
<ellipse cx="118.8" cy="404.1" rx="1.2" ry="1.4" fill="#55e040"/>
<ellipse cx="118.8" cy="408.5" rx="0.6" ry="1.0" fill="#f08030"/>
<ellipse cx="92.5" cy="409" rx="2.4" ry="2.9" fill="#ffffff"/>
<ellipse cx="92.5" cy="409" rx="1.0" ry="1.2" fill="#62808d"/>
<ellipse cx="92.5" cy="405.8" rx="0.7" ry="0.8" fill="#ffffff"/>
<ellipse cx="92.5" cy="412.2" rx="0.7" ry="0.8" fill="#ffffff"/>
<ellipse cx="90.0" cy="409" rx="0.7" ry="0.8" fill="#ffffff"/>
<ellipse cx="95.0" cy="409" rx="0.7" ry="0.8" fill="#ffffff"/>
<ellipse cx="90.7" cy="406.7" rx="0.7" ry="0.8" fill="#ffffff"/>
<ellipse cx="94.3" cy="406.7" rx="0.7" ry="0.8" fill="#ffffff"/>
<ellipse cx="90.7" cy="411.3" rx="0.7" ry="0.8" fill="#ffffff"/>
<ellipse cx="94.3" cy="411.3" rx="0.7" ry="0.8" fill="#ffffff"/>
<text x="105.5" y="421.7" font-size="4.3" fill="#eef2f4" font-family="Liberation Sans" font-weight="bold" text-anchor="middle" textLength="21" lengthAdjust="spacingAndGlyphs">11:07:34 AM</text>
<path d="M119.2,420 l2.4,-1.8 v3.6 z M121.8,420 l2.4,-1.8 v3.6 z" fill="#ffffff" />
<rect x="143.6" y="419.5" width="3" height="0.9" fill="#f0f4f6"/>
<rect x="149.8" y="419.5" width="3.4" height="0.9" fill="#f0f4f6"/>
<rect x="151.05" y="418.2" width="0.9" height="3.4" fill="#f0f4f6"/>
<ellipse cx="458.8" cy="403.9" rx="0.9" ry="1.6" fill="#111"/>
<ellipse cx="462.3" cy="403.9" rx="0.9" ry="1.6" fill="#111"/>
<rect x="460.2" y="407.8" width="0.8" height="1.2" fill="#c03040"/>
<rect x="536.8000000000001" y="401.8" width="0.8" height="13" fill="#2a5a9a"/>
<rect x="589.4" y="401.8" width="0.8" height="13" fill="#2a5a9a"/>
<rect x="593.0" y="401.8" width="0.8" height="13" fill="#2a5a9a"/>
<rect x="591.1" y="407.7" width="0.9" height="1.2" fill="#c03040"/>
<rect x="591.1" y="412.2" width="0.9" height="1.2" fill="#c03040"/>
<rect x="600.2" y="402" width="1" height="13" fill="#e8eef0"/>
<ellipse cx="600.6" cy="403.6" rx="1.3" ry="1.6" fill="#8ee030"/>
<path d="M604.2,403.8 l4.8,3.6 l-4.8,3.6 z" fill="#e8eef0" />
<path d="M613.6,404 l4,3.4 l-4,3.4 z" fill="#e8eef0" />
<rect x="618" y="404" width="0.9" height="6.8" fill="#e8eef0"/>
<text x="622" y="409.4" font-size="4.6" fill="#d0dce0" font-family="Liberation Sans" textLength="9" lengthAdjust="spacingAndGlyphs">Live</text>
<path d="M595,418.6 l2,1.5 l-2,1.5 z M597.2,418.6 l2,1.5 l-2,1.5 z" fill="#ffffff" />
<text x="612" y="421.8" font-size="4.3" fill="#eef2f4" font-family="Liberation Sans" font-weight="bold" text-anchor="middle" textLength="16.5" lengthAdjust="spacingAndGlyphs">12:35:07 PM</text>
<rect x="38" y="424.2" width="594" height="10.8" fill="#475b67"/>
<line x1="38" y1="434.5" x2="632" y2="434.5" stroke="#2f3f49" stroke-width="0.9"/>
<rect x="600" y="423.9" width="32" height="11.1" fill="#34464f"/>
<text x="40.8" y="429.4" font-size="4.6" fill="#eef2f4" font-family="Liberation Sans" font-weight="bold" textLength="22" lengthAdjust="spacingAndGlyphs">HDD: 60 GB</text>
<text x="40.8" y="434.0" font-size="4.6" fill="#eef2f4" font-family="Liberation Sans" font-weight="bold" textLength="24.5" lengthAdjust="spacingAndGlyphs">RAM: 700 MB</text>
<line x1="508.4" y1="424.5" x2="508.4" y2="435" stroke="#6d7f88" stroke-width="0.5"/>
<line x1="543.7" y1="424.5" x2="543.7" y2="435" stroke="#6d7f88" stroke-width="0.5"/>
<ellipse cx="512" cy="429.6" rx="1.2" ry="1.4" fill="none" stroke="#80c040" stroke-width="0.6"/>
<ellipse cx="514.2" cy="429.6" rx="1.2" ry="1.4" fill="none" stroke="#80c040" stroke-width="0.6"/>
<text x="517" y="431.2" font-size="4.4" fill="#e8eef0" font-family="Liberation Sans" font-weight="bold" textLength="24" lengthAdjust="spacingAndGlyphs">ISIS Modules</text>
<text x="548" y="431.2" font-size="4.4" fill="#e8eef0" font-family="Liberation Sans" font-weight="bold" textLength="8" lengthAdjust="spacingAndGlyphs">DNS</text>
<ellipse cx="565.2" cy="429.6" rx="4.6" ry="5.8" fill="none" stroke="#8a9aa2" stroke-width="0.7"/>
<text x="575" y="431.2" font-size="4.4" fill="#e8eef0" font-family="Liberation Sans" font-weight="bold" textLength="6" lengthAdjust="spacingAndGlyphs">HC</text>
<ellipse cx="588.5" cy="429.6" rx="4.6" ry="5.8" fill="none" stroke="#8a9aa2" stroke-width="0.7"/>
<text x="616.5" y="428.6" font-size="4.4" fill="#ffffff" font-family="Liberation Sans" font-weight="bold" text-anchor="middle" textLength="22" lengthAdjust="spacingAndGlyphs">10:26:29 AM</text>
<text x="616.5" y="433.6" font-size="4.4" fill="#ffffff" font-family="Liberation Sans" font-weight="bold" text-anchor="middle" textLength="15" lengthAdjust="spacingAndGlyphs">4/6/2023</text>
</svg></body></html>
